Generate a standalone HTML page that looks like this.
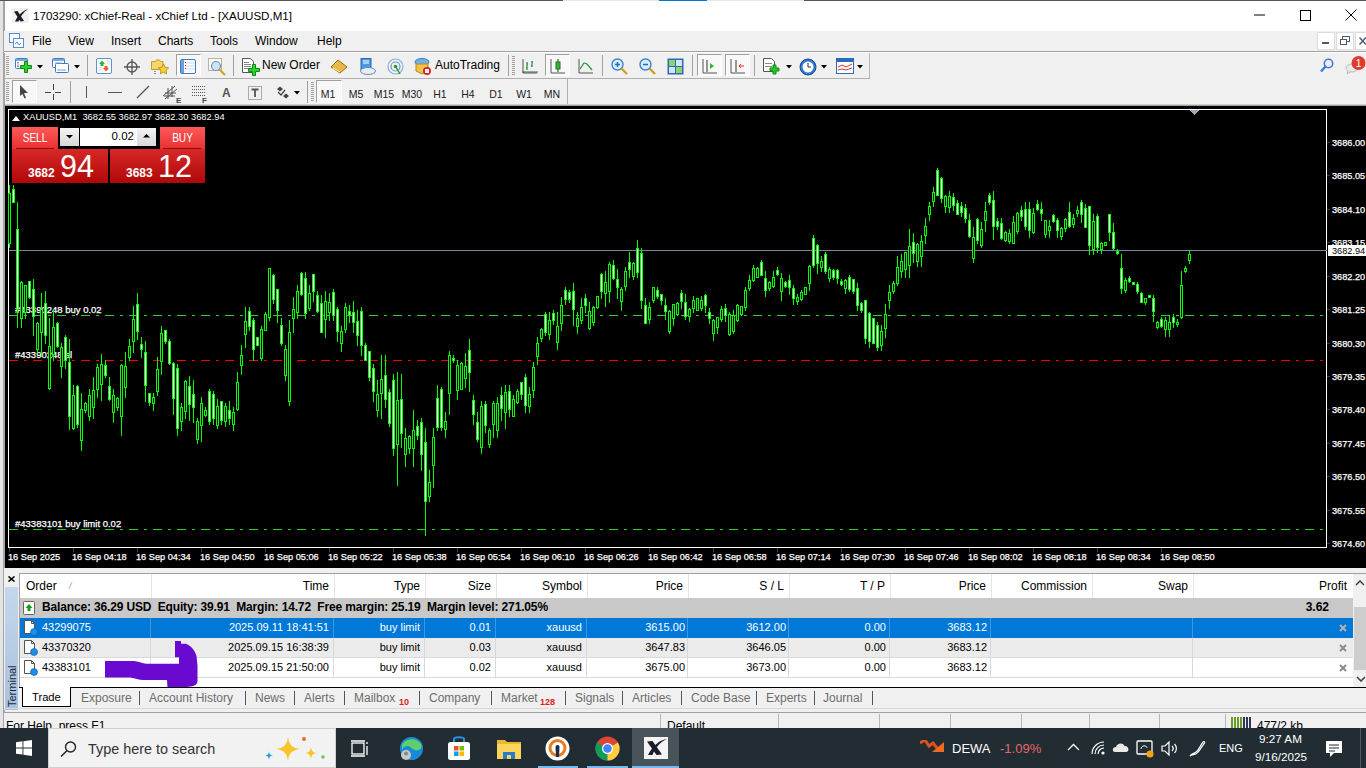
<!DOCTYPE html>
<html><head><meta charset="utf-8"><style>
*{box-sizing:border-box}
html,body{margin:0;padding:0;width:1366px;height:768px;overflow:hidden;background:#f0f0f0;font-family:"Liberation Sans", sans-serif;font-size:12px;color:#000}
.a{position:absolute;display:block}
.t{position:absolute;white-space:nowrap;line-height:1}
</style></head><body>
<div class="a" style="left:0;top:0;width:1366px;height:1px;background:#55515f"></div>
<div class="a" style="left:563px;top:0;width:241px;height:1px;background:#e6e6e6"></div>
<div class="a" style="left:659px;top:0;width:48px;height:1px;background:#0078d7"></div>
<div class="a" style="left:0;top:1px;width:4px;height:767px;background:#e4e4e4"></div>
<div class="a" style="left:3px;top:1px;width:2px;height:767px;background:#a4a4a4"></div>
<div class="a" style="left:5px;top:1px;width:1361px;height:30px;background:#fff"></div>
<svg class="a" style="left:12px;top:8px" width="17" height="15" viewBox="0 0 17 15" ><rect width="17" height="15" fill="#f0f0f0"/><path d="M2 3.5 L5.5 3 L12 13 L8.5 13.5 Z" fill="#1c1c28"/><path d="M16 1 C11 2.5 6 7 3 13.5 L6.5 13.5 C8 9 11 4.5 16 1 Z" fill="#1c1c28"/></svg><div class="t" style="left:33px;top:10px;font-size:11.6px">1703290: xChief-Real - xChief Ltd - [XAUUSD,M1]</div><svg class="a" style="left:1254px;top:14px" width="11" height="2" viewBox="0 0 11 2" ><rect width="11" height="1" y="0.5" fill="#000"/></svg><svg class="a" style="left:1300px;top:10px" width="11" height="11" viewBox="0 0 11 11" ><rect x="0.5" y="0.5" width="10" height="10" fill="none" stroke="#000"/></svg><svg class="a" style="left:1345px;top:9px" width="12" height="12" viewBox="0 0 12 12" ><path d="M0.5 0.5L11.5 11.5M11.5 0.5L0.5 11.5" stroke="#000"/></svg>
<div class="a" style="left:4px;top:31px;width:1362px;height:20px;background:#f0f0f0"></div>
<svg class="a" style="left:9px;top:33px" width="15" height="15" viewBox="0 0 15 15" ><rect x="0.5" y="0.5" width="10" height="9" fill="#fff" stroke="#5a8ad0"/><rect x="4.5" y="5.5" width="10" height="9" fill="#fff" stroke="#5a8ad0"/><path d="M6 11L8 9L10 12L12 10" stroke="#5a8ad0" fill="none"/></svg><div class="t" style="left:32px;top:35px;font-size:12px">File</div><div class="t" style="left:68px;top:35px;font-size:12px">View</div><div class="t" style="left:111px;top:35px;font-size:12px">Insert</div><div class="t" style="left:158px;top:35px;font-size:12px">Charts</div><div class="t" style="left:210px;top:35px;font-size:12px">Tools</div><div class="t" style="left:255px;top:35px;font-size:12px">Window</div><div class="t" style="left:317px;top:35px;font-size:12px">Help</div><div class="a" style="left:1317px;top:32px;width:18px;height:18px;background:#fff;border:1px solid #dcdcdc"></div><div class="a" style="left:1336px;top:32px;width:18px;height:18px;background:#fff;border:1px solid #dcdcdc"></div><div class="a" style="left:1355px;top:32px;width:18px;height:18px;background:#fff;border:1px solid #dcdcdc"></div><svg class="a" style="left:1322px;top:42px" width="7" height="2" viewBox="0 0 7 2" ><rect width="7" height="2" fill="#4a5a70"/></svg><svg class="a" style="left:1340px;top:36px" width="10" height="9" viewBox="0 0 10 9" ><rect x="2.5" y="0.5" width="7" height="5" fill="none" stroke="#4a5a70"/><rect x="0.5" y="3.5" width="6" height="5" fill="#fff" stroke="#4a5a70"/></svg><svg class="a" style="left:1359px;top:37px" width="7" height="8" viewBox="0 0 7 8" ><path d="M0.5 0.5L7 7.5M7 0.5L0.5 7.5" stroke="#4a5a70" stroke-width="1.5"/></svg>
<div class="a" style="left:4px;top:51px;width:1362px;height:1px;background:#a0a0a0"></div>
<div class="a" style="left:4px;top:52px;width:1362px;height:1px;background:#fff"></div>
<svg class="a" style="left:6px;top:56px" width="3" height="20" viewBox="0 0 3 20" ><rect x="0" y="0" width="3" height="1" fill="#a0a0a0"/><rect x="0" y="2" width="3" height="1" fill="#a0a0a0"/><rect x="0" y="4" width="3" height="1" fill="#a0a0a0"/><rect x="0" y="6" width="3" height="1" fill="#a0a0a0"/><rect x="0" y="8" width="3" height="1" fill="#a0a0a0"/><rect x="0" y="10" width="3" height="1" fill="#a0a0a0"/><rect x="0" y="12" width="3" height="1" fill="#a0a0a0"/><rect x="0" y="14" width="3" height="1" fill="#a0a0a0"/><rect x="0" y="16" width="3" height="1" fill="#a0a0a0"/><rect x="0" y="18" width="3" height="1" fill="#a0a0a0"/></svg><svg class="a" style="left:15px;top:58px" width="18" height="16" viewBox="0 0 18 16" ><rect x="0.5" y="0.5" width="12" height="10" rx="1" fill="#fff" stroke="#3d7bc4"/><rect x="1" y="1" width="11" height="2" fill="#7aa7dc"/><path d="M3 4V9M2 5L3 4L4 5M2 8L3 9L4 8" stroke="#7a9cc0" fill="none"/><path d="M9.5 3.5h3v4h4v3h-4v4h-3v-4h-4v-3h4z" fill="#2ad42a" stroke="#118811"/></svg><svg class="a" style="left:37px;top:65px" width="6" height="4" viewBox="0 0 6 4" ><path d="M0 0H6L3 3.5Z" fill="#000"/></svg><svg class="a" style="left:52px;top:58px" width="18" height="16" viewBox="0 0 18 16" ><rect x="0.5" y="0.5" width="12" height="9" rx="1" fill="#fff" stroke="#3d7bc4"/><rect x="1" y="1" width="11" height="2" fill="#7aa7dc"/><rect x="3.5" y="5.5" width="13" height="9" rx="1" fill="#fff" stroke="#3d7bc4"/><path d="M3 5h7M5 12h9" stroke="#7a9cc0"/></svg><svg class="a" style="left:74px;top:65px" width="6" height="4" viewBox="0 0 6 4" ><path d="M0 0H6L3 3.5Z" fill="#000"/></svg><div class="a" style="left:87px;top:55px;width:1px;height:21px;background:#a0a0a0"></div><svg class="a" style="left:96px;top:58px" width="16" height="16" viewBox="0 0 16 16" ><rect x="0.5" y="0.5" width="15" height="15" rx="1.5" fill="#fff" stroke="#5b94d6"/><path d="M3 6L6 2.5L9 6H7.5V8H4.5V6Z" fill="#2fb52f"/><path d="M7 10L10 13.5L13 10H11.5V8H8.5V10Z" fill="#f05a28"/><path d="M10 3h4M10 5h4M2 10h4M2 12h4" stroke="#ccc" stroke-width="0.7"/></svg><svg class="a" style="left:124px;top:59px" width="16" height="16" viewBox="0 0 16 16" ><circle cx="8" cy="8" r="5" fill="none" stroke="#555" stroke-width="1.3"/><path d="M8 0V16M0 8H16" stroke="#555" stroke-width="1.3"/></svg><svg class="a" style="left:151px;top:58px" width="19" height="17" viewBox="0 0 19 17" ><path d="M0.5 3.5h4l1-1.5h3l1 1.5h2.5v8h-11.5z" fill="#f5d66b" stroke="#c49a2a"/><path d="M12.5 6l1.6 3.3 3.6.5-2.6 2.5.6 3.6-3.2-1.7-3.2 1.7.6-3.6-2.6-2.5 3.6-.5z" fill="#f3d03a" stroke="#b8860b" stroke-width="0.8"/><path d="M4 13v1M4 15v1" stroke="#333"/></svg><div class="a" style="left:176px;top:54px;width:25px;height:22px;background:#f8f8f8;border-top:1px solid #a0a0a0;border-left:1px solid #a0a0a0;border-right:1px solid #fff;border-bottom:1px solid #fff"></div><svg class="a" style="left:180px;top:59px" width="16" height="15" viewBox="0 0 16 15" ><rect x="0.5" y="0.5" width="15" height="14" rx="1.5" fill="#fff" stroke="#3d7bc4"/><rect x="1" y="1" width="3" height="13" fill="#6a9fdc"/><path d="M6 4h9M6 7h9M6 10h9" stroke="#b8cdf0" stroke-width="0.8"/><path d="M5 3.5h1M5 6.5h1M5 9.5h1" stroke="#e00"/></svg><svg class="a" style="left:208px;top:58px" width="19" height="18" viewBox="0 0 19 18" ><rect x="0.5" y="0.5" width="13" height="12" fill="#fff" stroke="#c0b090"/><circle cx="8" cy="8" r="4.5" fill="#cfe3f7" stroke="#5a92d0" stroke-width="1.2"/><path d="M11 11L17 17" stroke="#d4a017" stroke-width="2"/></svg><div class="a" style="left:233px;top:55px;width:1px;height:21px;background:#a0a0a0"></div><svg class="a" style="left:242px;top:58px" width="18" height="18" viewBox="0 0 18 18" ><path d="M0.5 0.5h8l3 3v11h-11z" fill="#fff" stroke="#555"/><path d="M2 4.5h5M2 6.5h7M2 8.5h7M2 10.5h5" stroke="#888"/><path d="M10.5 6.5h3v4h4v3h-4v4h-3v-4h-4v-3h4z" fill="#2ad42a" stroke="#118811"/></svg><div class="t" style="left:262px;top:59px;font-size:12px">New Order</div><svg class="a" style="left:330px;top:59px" width="18" height="15" viewBox="0 0 18 15" ><path d="M1 8L8 1L17 8L10 14Z" fill="#e8b84a" stroke="#9a6a10"/><path d="M3 9L10 13" stroke="#fff3c0"/></svg><svg class="a" style="left:359px;top:58px" width="17" height="17" viewBox="0 0 17 17" ><rect x="2" y="0.5" width="10" height="11" fill="#4a9ae0" stroke="#2a6ab0"/><path d="M4 3h6M4 5h6" stroke="#fff"/><ellipse cx="9" cy="13" rx="7.5" ry="3.5" fill="#e8eef8" stroke="#6a8ab8"/></svg><svg class="a" style="left:387px;top:58px" width="17" height="17" viewBox="0 0 17 17" ><circle cx="8.5" cy="8.5" r="7.5" fill="none" stroke="#8ab0d8" stroke-width="1.2"/><circle cx="8.5" cy="8.5" r="4.5" fill="none" stroke="#6a98c8" stroke-width="1.2"/><circle cx="8.5" cy="8.5" r="1.8" fill="#2a9a3a"/><path d="M9 9L13 16" stroke="#2a9a3a" stroke-width="1.5"/></svg><svg class="a" style="left:413px;top:57px" width="19" height="19" viewBox="0 0 19 19" ><ellipse cx="9" cy="5" rx="7" ry="3.5" fill="#6fb2e6" stroke="#3a7ab8"/><path d="M3 7h12v7l-6 3-6-3z" fill="#f2c34a" stroke="#b88a1a"/><circle cx="14" cy="14" r="4" fill="#e02020"/><rect x="12" y="12" width="4" height="4" fill="#fff"/></svg><div class="t" style="left:435px;top:59px;font-size:12px">AutoTrading</div><div class="a" style="left:508px;top:55px;width:1px;height:21px;background:#a0a0a0"></div><svg class="a" style="left:512px;top:56px" width="3" height="20" viewBox="0 0 3 20" ><rect x="0" y="0" width="3" height="1" fill="#a0a0a0"/><rect x="0" y="2" width="3" height="1" fill="#a0a0a0"/><rect x="0" y="4" width="3" height="1" fill="#a0a0a0"/><rect x="0" y="6" width="3" height="1" fill="#a0a0a0"/><rect x="0" y="8" width="3" height="1" fill="#a0a0a0"/><rect x="0" y="10" width="3" height="1" fill="#a0a0a0"/><rect x="0" y="12" width="3" height="1" fill="#a0a0a0"/><rect x="0" y="14" width="3" height="1" fill="#a0a0a0"/><rect x="0" y="16" width="3" height="1" fill="#a0a0a0"/><rect x="0" y="18" width="3" height="1" fill="#a0a0a0"/></svg><svg class="a" style="left:522px;top:58px" width="16" height="16" viewBox="0 0 16 16" ><path d="M1 1V15H15" stroke="#555" fill="none"/><path d="M5 4V12M4 10H5M5 6H6M10 3V9M9 8H10M10 4H11" stroke="#2a9a3a" stroke-width="1.3" fill="none"/><path d="M0 14H16" stroke="#555"/></svg><div class="a" style="left:545px;top:54px;width:25px;height:22px;background:#f8f8f8;border-top:1px solid #a0a0a0;border-left:1px solid #a0a0a0;border-right:1px solid #fff;border-bottom:1px solid #fff"></div><svg class="a" style="left:550px;top:58px" width="16" height="16" viewBox="0 0 16 16" ><path d="M1 1V15H15" stroke="#555" fill="none"/><path d="M8 1V14" stroke="#333"/><rect x="6" y="4" width="4" height="7" fill="#2fb52f" stroke="#1a7a1a"/></svg><svg class="a" style="left:578px;top:58px" width="16" height="16" viewBox="0 0 16 16" ><path d="M1 1V15H15" stroke="#555" fill="none"/><path d="M2 11L6 5L9 6L14 12" stroke="#2a9a3a" stroke-width="1.3" fill="none"/></svg><div class="a" style="left:602px;top:55px;width:1px;height:21px;background:#a0a0a0"></div><svg class="a" style="left:611px;top:58px" width="17" height="17" viewBox="0 0 17 17" ><circle cx="6.5" cy="6.5" r="5.5" fill="#d8ecfb" stroke="#3a84d0" stroke-width="1.4"/><path d="M4 6.5H9M6.5 4V9" stroke="#2a6ab0" stroke-width="1.5"/><path d="M10.5 10.5L16 16" stroke="#d4a017" stroke-width="2.4"/></svg><svg class="a" style="left:639px;top:58px" width="17" height="17" viewBox="0 0 17 17" ><circle cx="6.5" cy="6.5" r="5.5" fill="#d8ecfb" stroke="#3a84d0" stroke-width="1.4"/><path d="M4 6.5H9" stroke="#2a6ab0" stroke-width="1.5"/><path d="M10.5 10.5L16 16" stroke="#d4a017" stroke-width="2.4"/></svg><svg class="a" style="left:667px;top:58px" width="17" height="17" viewBox="0 0 17 17" ><rect x="0.5" y="0.5" width="16" height="16" fill="#2a6ab8"/><rect x="2" y="2" width="6" height="6" fill="#8fd46a"/><rect x="9" y="2" width="6" height="6" fill="#d0e6fa"/><rect x="2" y="9" width="6" height="6" fill="#d0e6fa"/><rect x="9" y="9" width="6" height="6" fill="#8fd46a"/></svg><div class="a" style="left:692px;top:55px;width:1px;height:21px;background:#a0a0a0"></div><div class="a" style="left:697px;top:54px;width:25px;height:22px;background:#f8f8f8;border-top:1px solid #a0a0a0;border-left:1px solid #a0a0a0;border-right:1px solid #fff;border-bottom:1px solid #fff"></div><svg class="a" style="left:702px;top:58px" width="16" height="16" viewBox="0 0 16 16" ><path d="M1 1V15H15" stroke="#555" fill="none"/><path d="M5 2V14" stroke="#333"/><path d="M8 5L12 8L8 11Z" fill="#2fb52f"/></svg><div class="a" style="left:725px;top:54px;width:25px;height:22px;background:#f8f8f8;border-top:1px solid #a0a0a0;border-left:1px solid #a0a0a0;border-right:1px solid #fff;border-bottom:1px solid #fff"></div><svg class="a" style="left:730px;top:58px" width="16" height="16" viewBox="0 0 16 16" ><path d="M1 1V15H15" stroke="#555" fill="none"/><path d="M6 2V14" stroke="#333"/><path d="M14 8H9M11 6L9 8L11 10" stroke="#e03020" fill="none"/></svg><div class="a" style="left:754px;top:55px;width:1px;height:21px;background:#a0a0a0"></div><svg class="a" style="left:763px;top:58px" width="20" height="18" viewBox="0 0 20 18" ><path d="M0.5 0.5h8l3 3v10h-11z" fill="#fff" stroke="#555"/><path d="M2 5.5h7M2 8.5h7" stroke="#888"/><path d="M10 7h3v3h3v3h-3v3h-3v-3h-3v-3h3z" fill="#27c427" stroke="#138a13"/></svg><svg class="a" style="left:786px;top:65px" width="6" height="4" viewBox="0 0 6 4" ><path d="M0 0H6L3 3.5Z" fill="#000"/></svg><svg class="a" style="left:799px;top:58px" width="18" height="18" viewBox="0 0 18 18" ><circle cx="9" cy="9" r="8" fill="#2a7ad0" stroke="#1a4a90"/><circle cx="9" cy="9" r="5.5" fill="#fff"/><path d="M9 5V9H12" stroke="#333" fill="none"/></svg><svg class="a" style="left:821px;top:65px" width="6" height="4" viewBox="0 0 6 4" ><path d="M0 0H6L3 3.5Z" fill="#000"/></svg><svg class="a" style="left:836px;top:58px" width="18" height="16" viewBox="0 0 18 16" ><rect x="0.5" y="0.5" width="17" height="15" fill="#fff" stroke="#2a6ab8"/><rect x="1" y="1" width="16" height="3" fill="#2a6ab8"/><path d="M2 9L6 7L10 9L16 6M2 12L6 11L10 12L16 10" stroke="#d03a2a" fill="none"/></svg><svg class="a" style="left:857px;top:65px" width="6" height="4" viewBox="0 0 6 4" ><path d="M0 0H6L3 3.5Z" fill="#000"/></svg><div class="a" style="left:869px;top:53px;width:1px;height:26px;background:#b8b8b8"></div><svg class="a" style="left:1320px;top:58px" width="14" height="15" viewBox="0 0 14 15" ><circle cx="8.5" cy="5.5" r="4.2" fill="none" stroke="#3a7ad8" stroke-width="1.6"/><path d="M6 8L1 13.5" stroke="#3a7ad8" stroke-width="2.4"/></svg><svg class="a" style="left:1344px;top:56px" width="22" height="20" viewBox="0 0 22 20" ><ellipse cx="8" cy="12" rx="6" ry="4" fill="#eaeaea" stroke="#bbb"/><path d="M4 15L3 18L7 15.5" fill="#eaeaea" stroke="#bbb"/><circle cx="14.5" cy="7" r="7" fill="#e03a2a"/><text x="14.5" y="11" text-anchor="middle" font-family='"Liberation Sans"' font-size="11" fill="#fff">1</text></svg>
<div class="a" style="left:4px;top:78px;width:866px;height:1px;background:#b0b0b0"></div>
<svg class="a" style="left:6px;top:82px" width="3" height="20" viewBox="0 0 3 20" ><rect x="0" y="0" width="3" height="1" fill="#a0a0a0"/><rect x="0" y="2" width="3" height="1" fill="#a0a0a0"/><rect x="0" y="4" width="3" height="1" fill="#a0a0a0"/><rect x="0" y="6" width="3" height="1" fill="#a0a0a0"/><rect x="0" y="8" width="3" height="1" fill="#a0a0a0"/><rect x="0" y="10" width="3" height="1" fill="#a0a0a0"/><rect x="0" y="12" width="3" height="1" fill="#a0a0a0"/><rect x="0" y="14" width="3" height="1" fill="#a0a0a0"/><rect x="0" y="16" width="3" height="1" fill="#a0a0a0"/><rect x="0" y="18" width="3" height="1" fill="#a0a0a0"/></svg><div class="a" style="left:12px;top:80px;width:25px;height:23px;background:#f8f8f8;border-top:1px solid #a0a0a0;border-left:1px solid #a0a0a0;border-right:1px solid #fff;border-bottom:1px solid #fff"></div><svg class="a" style="left:19px;top:85px" width="10" height="14" viewBox="0 0 10 14" ><path d="M1 0L9 8H5L7 13L5.5 13.5L3.5 9L1 11Z" fill="#444"/></svg><svg class="a" style="left:45px;top:84px" width="16" height="16" viewBox="0 0 16 16" ><path d="M8.5 0V6M8.5 10V16M0 8.5H6M10 8.5H16" stroke="#444"/></svg><div class="a" style="left:70px;top:81px;width:1px;height:22px;background:#a0a0a0"></div><svg class="a" style="left:86px;top:86px" width="1" height="12" viewBox="0 0 1 12" ><rect width="1" height="12" fill="#555"/></svg><svg class="a" style="left:108px;top:92px" width="14" height="1" viewBox="0 0 14 1" ><rect width="14" height="1" fill="#555"/></svg><svg class="a" style="left:136px;top:85px" width="14" height="14" viewBox="0 0 14 14" ><path d="M1 13L13 1" stroke="#555" stroke-width="1.2"/></svg><svg class="a" style="left:162px;top:84px" width="22" height="20" viewBox="0 0 22 20" ><path d="M1 12L13 2M3 15L15 5M3 9H14M2 12H13M6 4V15M10 2V13" stroke="#555" stroke-width="1"/><text x="14" y="19" font-family='"Liberation Sans"' font-size="8" font-weight="bold" fill="#444">E</text></svg><svg class="a" style="left:191px;top:85px" width="18" height="19" viewBox="0 0 18 19" ><path d="M1 1.5H14M1 4.5H14M1 7.5H14M1 10.5H14" stroke="#555" stroke-dasharray="1 1"/><text x="11" y="18" font-family='"Liberation Sans"' font-size="8" font-weight="bold" fill="#444">F</text></svg><div class="t" style="left:222px;top:87px;font-size:12px;font-weight:bold;color:#555">A</div><svg class="a" style="left:248px;top:86px" width="14" height="14" viewBox="0 0 14 14" ><rect x="0.5" y="0.5" width="13" height="13" fill="none" stroke="#666" stroke-dasharray="1 1"/><path d="M3.5 3.5H10.5M7 3.5V11" stroke="#555" stroke-width="1.8"/></svg><svg class="a" style="left:276px;top:86px" width="15" height="14" viewBox="0 0 15 14" ><path d="M1 3L4 0.5L7 3L4 5.5Z M7 10L10 7.5L13 10L10 12.5Z" fill="#444"/><path d="M2 6L5 9L9 4" stroke="#444" stroke-width="1.3" fill="none"/></svg><svg class="a" style="left:294px;top:91px" width="6" height="4" viewBox="0 0 6 4" ><path d="M0 0H6L3 3.5Z" fill="#000"/></svg><div class="a" style="left:307px;top:81px;width:1px;height:22px;background:#a0a0a0"></div><svg class="a" style="left:311px;top:82px" width="3" height="20" viewBox="0 0 3 20" ><rect x="0" y="0" width="3" height="1" fill="#a0a0a0"/><rect x="0" y="2" width="3" height="1" fill="#a0a0a0"/><rect x="0" y="4" width="3" height="1" fill="#a0a0a0"/><rect x="0" y="6" width="3" height="1" fill="#a0a0a0"/><rect x="0" y="8" width="3" height="1" fill="#a0a0a0"/><rect x="0" y="10" width="3" height="1" fill="#a0a0a0"/><rect x="0" y="12" width="3" height="1" fill="#a0a0a0"/><rect x="0" y="14" width="3" height="1" fill="#a0a0a0"/><rect x="0" y="16" width="3" height="1" fill="#a0a0a0"/><rect x="0" y="18" width="3" height="1" fill="#a0a0a0"/></svg><div class="a" style="left:316px;top:80px;width:26px;height:23px;background:#f8f8f8;border-top:1px solid #a0a0a0;border-left:1px solid #a0a0a0;border-right:1px solid #fff;border-bottom:1px solid #fff"></div><div class="t" style="left:308px;top:89px;width:40px;text-align:center;font-size:10.5px;color:#222">M1</div><div class="t" style="left:336px;top:89px;width:40px;text-align:center;font-size:10.5px;color:#222">M5</div><div class="t" style="left:364px;top:89px;width:40px;text-align:center;font-size:10.5px;color:#222">M15</div><div class="t" style="left:392px;top:89px;width:40px;text-align:center;font-size:10.5px;color:#222">M30</div><div class="t" style="left:420px;top:89px;width:40px;text-align:center;font-size:10.5px;color:#222">H1</div><div class="t" style="left:448px;top:89px;width:40px;text-align:center;font-size:10.5px;color:#222">H4</div><div class="t" style="left:476px;top:89px;width:40px;text-align:center;font-size:10.5px;color:#222">D1</div><div class="t" style="left:504px;top:89px;width:40px;text-align:center;font-size:10.5px;color:#222">W1</div><div class="t" style="left:532px;top:89px;width:40px;text-align:center;font-size:10.5px;color:#222">MN</div><div class="a" style="left:567px;top:79px;width:1px;height:26px;background:#b0b0b0"></div>
<div class="a" style="left:5px;top:104px;width:1361px;height:1px;background:#d0d0d0"></div>
<div class="a" style="left:5px;top:105px;width:1361px;height:1px;background:#a0a0a0"></div>
<div class="a" style="left:5px;top:106px;width:1361px;height:462px;background:#000"></div>
<svg width="1366" height="462" style="position:absolute;left:0;top:106px;display:block" shape-rendering="crispEdges"><rect x="8.5" y="3.5" width="1318" height="438" fill="none" stroke="#fff" stroke-width="1"/><g font-family='"Liberation Sans"' font-size="9.5" fill="#fff" stroke="#fff" stroke-width="0.25"><text x="15" y="207">#43390248 buy 0.02</text><text x="15" y="252">#43390248 sl</text><text x="15" y="421">#43383101 buy limit 0.02</text></g><line x1="9" y1="209.5" x2="1326" y2="209.5" stroke="#32cd32" stroke-width="1" stroke-dasharray="9 6 3 6"/><line x1="9" y1="254.5" x2="1326" y2="254.5" stroke="#ff0000" stroke-width="1" stroke-dasharray="9 6 3 6"/><line x1="9" y1="423.5" x2="1326" y2="423.5" stroke="#32cd32" stroke-width="1" stroke-dasharray="9 6 3 6"/><line x1="9" y1="144.5" x2="1327" y2="144.5" stroke="#778899" stroke-width="1"/><line x1="9.5" y1="79" x2="9.5" y2="142" stroke="#0f0"/><rect x="8.5" y="87.5" width="2" height="50" fill="#000" stroke="#0f0"/><line x1="13.5" y1="79" x2="13.5" y2="97" stroke="#0f0"/><rect x="12.5" y="83.5" width="2" height="13" fill="#fff" stroke="#0f0"/><line x1="17.5" y1="96" x2="17.5" y2="222" stroke="#0f0"/><rect x="16.5" y="123.5" width="2" height="80" fill="#fff" stroke="#0f0"/><line x1="21.5" y1="175" x2="21.5" y2="222" stroke="#0f0"/><rect x="20.5" y="176.5" width="2" height="36" fill="#000" stroke="#0f0"/><line x1="25.5" y1="179" x2="25.5" y2="213" stroke="#0f0"/><rect x="24.5" y="179.5" width="2" height="27" fill="#000" stroke="#0f0"/><line x1="29.5" y1="175" x2="29.5" y2="193" stroke="#0f0"/><rect x="28.5" y="175.5" width="2" height="16" fill="#fff" stroke="#0f0"/><line x1="33.5" y1="173" x2="33.5" y2="230" stroke="#0f0"/><rect x="32.5" y="183.5" width="2" height="27" fill="#fff" stroke="#0f0"/><line x1="37.5" y1="216" x2="37.5" y2="247" stroke="#0f0"/><rect x="36.5" y="217.5" width="2" height="26" fill="#000" stroke="#0f0"/><line x1="41.5" y1="187" x2="41.5" y2="251" stroke="#0f0"/><rect x="40.5" y="203.5" width="2" height="23" fill="#000" stroke="#0f0"/><line x1="45.5" y1="185" x2="45.5" y2="238" stroke="#0f0"/><rect x="44.5" y="197.5" width="2" height="32" fill="#fff" stroke="#0f0"/><line x1="49.5" y1="212" x2="49.5" y2="284" stroke="#0f0"/><rect x="48.5" y="240.5" width="2" height="42" fill="#000" stroke="#0f0"/><line x1="53.5" y1="204" x2="53.5" y2="255" stroke="#0f0"/><rect x="52.5" y="221.5" width="2" height="27" fill="#000" stroke="#0f0"/><line x1="57.5" y1="216" x2="57.5" y2="242" stroke="#0f0"/><rect x="56.5" y="217.5" width="2" height="23" fill="#fff" stroke="#0f0"/><line x1="61.5" y1="237" x2="61.5" y2="272" stroke="#0f0"/><rect x="60.5" y="241.5" width="2" height="19" fill="#000" stroke="#0f0"/><line x1="65.5" y1="229" x2="65.5" y2="263" stroke="#0f0"/><rect x="64.5" y="231.5" width="2" height="23" fill="#fff" stroke="#0f0"/><line x1="69.5" y1="233" x2="69.5" y2="324" stroke="#0f0"/><rect x="68.5" y="256.5" width="2" height="54" fill="#fff" stroke="#0f0"/><line x1="73.5" y1="279" x2="73.5" y2="324" stroke="#0f0"/><rect x="72.5" y="289.5" width="2" height="33" fill="#000" stroke="#0f0"/><line x1="77.5" y1="279" x2="77.5" y2="322" stroke="#0f0"/><rect x="76.5" y="280.5" width="2" height="38" fill="#fff" stroke="#0f0"/><line x1="81.5" y1="287" x2="81.5" y2="345" stroke="#0f0"/><rect x="80.5" y="303.5" width="2" height="31" fill="#000" stroke="#0f0"/><line x1="85.5" y1="296" x2="85.5" y2="307" stroke="#0f0"/><rect x="84.5" y="297.5" width="2" height="7" fill="#000" stroke="#0f0"/><line x1="89.5" y1="283" x2="89.5" y2="315" stroke="#0f0"/><rect x="88.5" y="289.5" width="2" height="21" fill="#000" stroke="#0f0"/><line x1="93.5" y1="271" x2="93.5" y2="313" stroke="#0f0"/><rect x="92.5" y="284.5" width="2" height="17" fill="#000" stroke="#0f0"/><line x1="97.5" y1="258" x2="97.5" y2="292" stroke="#0f0"/><rect x="96.5" y="261.5" width="2" height="22" fill="#000" stroke="#0f0"/><line x1="101.5" y1="248" x2="101.5" y2="295" stroke="#0f0"/><rect x="100.5" y="258.5" width="2" height="20" fill="#000" stroke="#0f0"/><line x1="105.5" y1="254" x2="105.5" y2="272" stroke="#0f0"/><rect x="104.5" y="259.5" width="2" height="10" fill="#fff" stroke="#0f0"/><line x1="109.5" y1="271" x2="109.5" y2="295" stroke="#0f0"/><rect x="108.5" y="280.5" width="2" height="13" fill="#fff" stroke="#0f0"/><line x1="113.5" y1="283" x2="113.5" y2="317" stroke="#0f0"/><rect x="112.5" y="289.5" width="2" height="17" fill="#000" stroke="#0f0"/><line x1="117.5" y1="291" x2="117.5" y2="305" stroke="#0f0"/><rect x="116.5" y="292.5" width="2" height="9" fill="#000" stroke="#0f0"/><line x1="121.5" y1="258" x2="121.5" y2="330" stroke="#0f0"/><rect x="120.5" y="259.5" width="2" height="51" fill="#000" stroke="#0f0"/><line x1="125.5" y1="246" x2="125.5" y2="292" stroke="#0f0"/><rect x="124.5" y="260.5" width="2" height="21" fill="#000" stroke="#0f0"/><line x1="129.5" y1="233" x2="129.5" y2="255" stroke="#0f0"/><rect x="128.5" y="240.5" width="2" height="11" fill="#000" stroke="#0f0"/><line x1="133.5" y1="200" x2="133.5" y2="247" stroke="#0f0"/><rect x="132.5" y="213.5" width="2" height="22" fill="#000" stroke="#0f0"/><line x1="137.5" y1="187" x2="137.5" y2="234" stroke="#0f0"/><rect x="136.5" y="198.5" width="2" height="27" fill="#fff" stroke="#0f0"/><line x1="141.5" y1="231" x2="141.5" y2="252" stroke="#0f0"/><rect x="140.5" y="238.5" width="2" height="5" fill="#fff" stroke="#0f0"/><line x1="145.5" y1="235" x2="145.5" y2="296" stroke="#0f0"/><rect x="144.5" y="246.5" width="2" height="33" fill="#fff" stroke="#0f0"/><line x1="149.5" y1="287" x2="149.5" y2="300" stroke="#0f0"/><rect x="148.5" y="287.5" width="2" height="9" fill="#fff" stroke="#0f0"/><line x1="153.5" y1="287" x2="153.5" y2="305" stroke="#0f0"/><rect x="152.5" y="291.5" width="2" height="6" fill="#000" stroke="#0f0"/><line x1="157.5" y1="251" x2="157.5" y2="290" stroke="#0f0"/><rect x="156.5" y="263.5" width="2" height="22" fill="#000" stroke="#0f0"/><line x1="161.5" y1="220" x2="161.5" y2="269" stroke="#0f0"/><rect x="160.5" y="227.5" width="2" height="28" fill="#000" stroke="#0f0"/><line x1="165.5" y1="224" x2="165.5" y2="238" stroke="#0f0"/><rect x="164.5" y="224.5" width="2" height="11" fill="#fff" stroke="#0f0"/><line x1="169.5" y1="233" x2="169.5" y2="259" stroke="#0f0"/><rect x="168.5" y="235.5" width="2" height="22" fill="#fff" stroke="#0f0"/><line x1="173.5" y1="256" x2="173.5" y2="309" stroke="#0f0"/><rect x="172.5" y="257.5" width="2" height="35" fill="#fff" stroke="#0f0"/><line x1="177.5" y1="258" x2="177.5" y2="330" stroke="#0f0"/><rect x="176.5" y="262.5" width="2" height="60" fill="#fff" stroke="#0f0"/><line x1="181.5" y1="297" x2="181.5" y2="325" stroke="#0f0"/><rect x="180.5" y="301.5" width="2" height="14" fill="#000" stroke="#0f0"/><line x1="185.5" y1="274" x2="185.5" y2="313" stroke="#0f0"/><rect x="184.5" y="275.5" width="2" height="30" fill="#000" stroke="#0f0"/><line x1="189.5" y1="270" x2="189.5" y2="315" stroke="#0f0"/><rect x="188.5" y="280.5" width="2" height="18" fill="#fff" stroke="#0f0"/><line x1="193.5" y1="274" x2="193.5" y2="317" stroke="#0f0"/><rect x="192.5" y="288.5" width="2" height="13" fill="#fff" stroke="#0f0"/><line x1="197.5" y1="312" x2="197.5" y2="338" stroke="#0f0"/><rect x="196.5" y="315.5" width="2" height="18" fill="#000" stroke="#0f0"/><line x1="201.5" y1="291" x2="201.5" y2="336" stroke="#0f0"/><rect x="200.5" y="297.5" width="2" height="22" fill="#000" stroke="#0f0"/><line x1="205.5" y1="301" x2="205.5" y2="311" stroke="#0f0"/><rect x="204.5" y="304.5" width="2" height="5" fill="#000" stroke="#0f0"/><line x1="209.5" y1="283" x2="209.5" y2="319" stroke="#0f0"/><rect x="208.5" y="285.5" width="2" height="30" fill="#fff" stroke="#0f0"/><line x1="213.5" y1="285" x2="213.5" y2="319" stroke="#0f0"/><rect x="212.5" y="288.5" width="2" height="24" fill="#fff" stroke="#0f0"/><line x1="217.5" y1="293" x2="217.5" y2="323" stroke="#0f0"/><rect x="216.5" y="300.5" width="2" height="19" fill="#000" stroke="#0f0"/><line x1="221.5" y1="295" x2="221.5" y2="319" stroke="#0f0"/><rect x="220.5" y="295.5" width="2" height="19" fill="#fff" stroke="#0f0"/><line x1="225.5" y1="297" x2="225.5" y2="321" stroke="#0f0"/><rect x="224.5" y="300.5" width="2" height="15" fill="#000" stroke="#0f0"/><line x1="229.5" y1="295" x2="229.5" y2="319" stroke="#0f0"/><rect x="228.5" y="304.5" width="2" height="8" fill="#fff" stroke="#0f0"/><line x1="233.5" y1="301" x2="233.5" y2="325" stroke="#0f0"/><rect x="232.5" y="306.5" width="2" height="12" fill="#000" stroke="#0f0"/><line x1="237.5" y1="266" x2="237.5" y2="305" stroke="#0f0"/><rect x="236.5" y="276.5" width="2" height="27" fill="#000" stroke="#0f0"/><line x1="241.5" y1="239" x2="241.5" y2="269" stroke="#0f0"/><rect x="240.5" y="249.5" width="2" height="10" fill="#000" stroke="#0f0"/><line x1="245.5" y1="201" x2="245.5" y2="242" stroke="#0f0"/><rect x="244.5" y="215.5" width="2" height="13" fill="#000" stroke="#0f0"/><line x1="249.5" y1="201" x2="249.5" y2="225" stroke="#0f0"/><rect x="248.5" y="205.5" width="2" height="15" fill="#fff" stroke="#0f0"/><line x1="253.5" y1="212" x2="253.5" y2="255" stroke="#0f0"/><rect x="252.5" y="214.5" width="2" height="29" fill="#fff" stroke="#0f0"/><line x1="257.5" y1="231" x2="257.5" y2="240" stroke="#0f0"/><rect x="256.5" y="231.5" width="2" height="8" fill="#fff" stroke="#0f0"/><line x1="261.5" y1="220" x2="261.5" y2="255" stroke="#0f0"/><rect x="260.5" y="223.5" width="2" height="29" fill="#000" stroke="#0f0"/><line x1="265.5" y1="206" x2="265.5" y2="225" stroke="#0f0"/><rect x="264.5" y="208.5" width="2" height="16" fill="#000" stroke="#0f0"/><line x1="269.5" y1="162" x2="269.5" y2="215" stroke="#0f0"/><rect x="268.5" y="162.5" width="2" height="49" fill="#000" stroke="#0f0"/><line x1="273.5" y1="168" x2="273.5" y2="198" stroke="#0f0"/><rect x="272.5" y="169.5" width="2" height="24" fill="#fff" stroke="#0f0"/><line x1="277.5" y1="183" x2="277.5" y2="217" stroke="#0f0"/><rect x="276.5" y="183.5" width="2" height="21" fill="#fff" stroke="#0f0"/><line x1="281.5" y1="212" x2="281.5" y2="240" stroke="#0f0"/><rect x="280.5" y="219.5" width="2" height="18" fill="#fff" stroke="#0f0"/><line x1="285.5" y1="239" x2="285.5" y2="275" stroke="#0f0"/><rect x="284.5" y="243.5" width="2" height="26" fill="#000" stroke="#0f0"/><line x1="289.5" y1="214" x2="289.5" y2="300" stroke="#0f0"/><rect x="288.5" y="226.5" width="2" height="69" fill="#000" stroke="#0f0"/><line x1="293.5" y1="191" x2="293.5" y2="227" stroke="#0f0"/><rect x="292.5" y="203.5" width="2" height="9" fill="#000" stroke="#0f0"/><line x1="297.5" y1="179" x2="297.5" y2="213" stroke="#0f0"/><rect x="296.5" y="185.5" width="2" height="21" fill="#000" stroke="#0f0"/><line x1="301.5" y1="166" x2="301.5" y2="190" stroke="#0f0"/><rect x="300.5" y="167.5" width="2" height="21" fill="#fff" stroke="#0f0"/><line x1="305.5" y1="166" x2="305.5" y2="213" stroke="#0f0"/><rect x="304.5" y="172.5" width="2" height="35" fill="#fff" stroke="#0f0"/><line x1="309.5" y1="179" x2="309.5" y2="205" stroke="#0f0"/><rect x="308.5" y="187.5" width="2" height="15" fill="#000" stroke="#0f0"/><line x1="313.5" y1="168" x2="313.5" y2="196" stroke="#0f0"/><rect x="312.5" y="168.5" width="2" height="17" fill="#fff" stroke="#0f0"/><line x1="317.5" y1="185" x2="317.5" y2="207" stroke="#0f0"/><rect x="316.5" y="189.5" width="2" height="16" fill="#fff" stroke="#0f0"/><line x1="321.5" y1="189" x2="321.5" y2="227" stroke="#0f0"/><rect x="320.5" y="197.5" width="2" height="29" fill="#fff" stroke="#0f0"/><line x1="325.5" y1="185" x2="325.5" y2="232" stroke="#0f0"/><rect x="324.5" y="195.5" width="2" height="18" fill="#000" stroke="#0f0"/><line x1="329.5" y1="187" x2="329.5" y2="215" stroke="#0f0"/><rect x="328.5" y="196.5" width="2" height="10" fill="#000" stroke="#0f0"/><line x1="333.5" y1="183" x2="333.5" y2="215" stroke="#0f0"/><rect x="332.5" y="186.5" width="2" height="23" fill="#fff" stroke="#0f0"/><line x1="337.5" y1="201" x2="337.5" y2="236" stroke="#0f0"/><rect x="336.5" y="203.5" width="2" height="22" fill="#fff" stroke="#0f0"/><line x1="341.5" y1="220" x2="341.5" y2="246" stroke="#0f0"/><rect x="340.5" y="225.5" width="2" height="12" fill="#000" stroke="#0f0"/><line x1="345.5" y1="197" x2="345.5" y2="227" stroke="#0f0"/><rect x="344.5" y="201.5" width="2" height="22" fill="#000" stroke="#0f0"/><line x1="349.5" y1="199" x2="349.5" y2="217" stroke="#0f0"/><rect x="348.5" y="205.5" width="2" height="4" fill="#fff" stroke="#0f0"/><line x1="353.5" y1="195" x2="353.5" y2="227" stroke="#0f0"/><rect x="352.5" y="206.5" width="2" height="10" fill="#fff" stroke="#0f0"/><line x1="357.5" y1="204" x2="357.5" y2="240" stroke="#0f0"/><rect x="356.5" y="215.5" width="2" height="14" fill="#fff" stroke="#0f0"/><line x1="361.5" y1="201" x2="361.5" y2="250" stroke="#0f0"/><rect x="360.5" y="205.5" width="2" height="34" fill="#fff" stroke="#0f0"/><line x1="365.5" y1="237" x2="365.5" y2="255" stroke="#0f0"/><rect x="364.5" y="239.5" width="2" height="15" fill="#fff" stroke="#0f0"/><line x1="369.5" y1="245" x2="369.5" y2="275" stroke="#0f0"/><rect x="368.5" y="245.5" width="2" height="26" fill="#fff" stroke="#0f0"/><line x1="373.5" y1="258" x2="373.5" y2="296" stroke="#0f0"/><rect x="372.5" y="262.5" width="2" height="23" fill="#fff" stroke="#0f0"/><line x1="377.5" y1="274" x2="377.5" y2="311" stroke="#0f0"/><rect x="376.5" y="288.5" width="2" height="16" fill="#000" stroke="#0f0"/><line x1="381.5" y1="249" x2="381.5" y2="313" stroke="#0f0"/><rect x="380.5" y="273.5" width="2" height="14" fill="#000" stroke="#0f0"/><line x1="385.5" y1="249" x2="385.5" y2="302" stroke="#0f0"/><rect x="384.5" y="269.5" width="2" height="24" fill="#fff" stroke="#0f0"/><line x1="389.5" y1="283" x2="389.5" y2="321" stroke="#0f0"/><rect x="388.5" y="286.5" width="2" height="31" fill="#fff" stroke="#0f0"/><line x1="393.5" y1="268" x2="393.5" y2="350" stroke="#0f0"/><rect x="392.5" y="274.5" width="2" height="68" fill="#fff" stroke="#0f0"/><line x1="397.5" y1="266" x2="397.5" y2="380" stroke="#0f0"/><rect x="396.5" y="294.5" width="2" height="44" fill="#000" stroke="#0f0"/><line x1="401.5" y1="268" x2="401.5" y2="342" stroke="#0f0"/><rect x="400.5" y="293.5" width="2" height="34" fill="#fff" stroke="#0f0"/><line x1="405.5" y1="322" x2="405.5" y2="361" stroke="#0f0"/><rect x="404.5" y="332.5" width="2" height="16" fill="#000" stroke="#0f0"/><line x1="409.5" y1="329" x2="409.5" y2="348" stroke="#0f0"/><rect x="408.5" y="330.5" width="2" height="12" fill="#000" stroke="#0f0"/><line x1="413.5" y1="304" x2="413.5" y2="361" stroke="#0f0"/><rect x="412.5" y="324.5" width="2" height="18" fill="#000" stroke="#0f0"/><line x1="417.5" y1="314" x2="417.5" y2="334" stroke="#0f0"/><rect x="416.5" y="320.5" width="2" height="9" fill="#fff" stroke="#0f0"/><line x1="421.5" y1="312" x2="421.5" y2="365" stroke="#0f0"/><rect x="420.5" y="316.5" width="2" height="32" fill="#fff" stroke="#0f0"/><line x1="425.5" y1="322" x2="425.5" y2="430" stroke="#0f0"/><rect x="424.5" y="336.5" width="2" height="59" fill="#fff" stroke="#0f0"/><line x1="429.5" y1="364" x2="429.5" y2="396" stroke="#0f0"/><rect x="428.5" y="376.5" width="2" height="14" fill="#000" stroke="#0f0"/><line x1="433.5" y1="322" x2="433.5" y2="382" stroke="#0f0"/><rect x="432.5" y="331.5" width="2" height="28" fill="#000" stroke="#0f0"/><line x1="437.5" y1="279" x2="437.5" y2="325" stroke="#0f0"/><rect x="436.5" y="292.5" width="2" height="29" fill="#fff" stroke="#0f0"/><line x1="441.5" y1="281" x2="441.5" y2="325" stroke="#0f0"/><rect x="440.5" y="283.5" width="2" height="38" fill="#fff" stroke="#0f0"/><line x1="445.5" y1="306" x2="445.5" y2="332" stroke="#0f0"/><rect x="444.5" y="315.5" width="2" height="8" fill="#000" stroke="#0f0"/><line x1="449.5" y1="245" x2="449.5" y2="309" stroke="#0f0"/><rect x="448.5" y="249.5" width="2" height="38" fill="#000" stroke="#0f0"/><line x1="453.5" y1="249" x2="453.5" y2="257" stroke="#0f0"/><rect x="452.5" y="252.5" width="2" height="2" fill="#fff" stroke="#0f0"/><line x1="457.5" y1="254" x2="457.5" y2="294" stroke="#0f0"/><rect x="456.5" y="259.5" width="2" height="25" fill="#000" stroke="#0f0"/><line x1="461.5" y1="256" x2="461.5" y2="284" stroke="#0f0"/><rect x="460.5" y="257.5" width="2" height="26" fill="#000" stroke="#0f0"/><line x1="465.5" y1="247" x2="465.5" y2="282" stroke="#0f0"/><rect x="464.5" y="260.5" width="2" height="12" fill="#000" stroke="#0f0"/><line x1="469.5" y1="233" x2="469.5" y2="286" stroke="#0f0"/><rect x="468.5" y="244.5" width="2" height="22" fill="#fff" stroke="#0f0"/><line x1="473.5" y1="289" x2="473.5" y2="319" stroke="#0f0"/><rect x="472.5" y="294.5" width="2" height="14" fill="#fff" stroke="#0f0"/><line x1="477.5" y1="306" x2="477.5" y2="336" stroke="#0f0"/><rect x="476.5" y="316.5" width="2" height="17" fill="#fff" stroke="#0f0"/><line x1="481.5" y1="295" x2="481.5" y2="348" stroke="#0f0"/><rect x="480.5" y="300.5" width="2" height="41" fill="#000" stroke="#0f0"/><line x1="485.5" y1="295" x2="485.5" y2="327" stroke="#0f0"/><rect x="484.5" y="298.5" width="2" height="21" fill="#fff" stroke="#0f0"/><line x1="489.5" y1="322" x2="489.5" y2="342" stroke="#0f0"/><rect x="488.5" y="324.5" width="2" height="14" fill="#000" stroke="#0f0"/><line x1="493.5" y1="295" x2="493.5" y2="332" stroke="#0f0"/><rect x="492.5" y="297.5" width="2" height="21" fill="#000" stroke="#0f0"/><line x1="497.5" y1="291" x2="497.5" y2="332" stroke="#0f0"/><rect x="496.5" y="297.5" width="2" height="27" fill="#000" stroke="#0f0"/><line x1="501.5" y1="281" x2="501.5" y2="315" stroke="#0f0"/><rect x="500.5" y="289.5" width="2" height="13" fill="#fff" stroke="#0f0"/><line x1="505.5" y1="279" x2="505.5" y2="323" stroke="#0f0"/><rect x="504.5" y="286.5" width="2" height="20" fill="#000" stroke="#0f0"/><line x1="509.5" y1="279" x2="509.5" y2="311" stroke="#0f0"/><rect x="508.5" y="285.5" width="2" height="18" fill="#fff" stroke="#0f0"/><line x1="513.5" y1="289" x2="513.5" y2="311" stroke="#0f0"/><rect x="512.5" y="293.5" width="2" height="17" fill="#000" stroke="#0f0"/><line x1="517.5" y1="283" x2="517.5" y2="298" stroke="#0f0"/><rect x="516.5" y="285.5" width="2" height="11" fill="#000" stroke="#0f0"/><line x1="521.5" y1="276" x2="521.5" y2="294" stroke="#0f0"/><rect x="520.5" y="276.5" width="2" height="12" fill="#fff" stroke="#0f0"/><line x1="525.5" y1="268" x2="525.5" y2="307" stroke="#0f0"/><rect x="524.5" y="271.5" width="2" height="28" fill="#fff" stroke="#0f0"/><line x1="529.5" y1="281" x2="529.5" y2="307" stroke="#0f0"/><rect x="528.5" y="288.5" width="2" height="12" fill="#000" stroke="#0f0"/><line x1="533.5" y1="256" x2="533.5" y2="292" stroke="#0f0"/><rect x="532.5" y="261.5" width="2" height="23" fill="#000" stroke="#0f0"/><line x1="537.5" y1="231" x2="537.5" y2="259" stroke="#0f0"/><rect x="536.5" y="237.5" width="2" height="13" fill="#000" stroke="#0f0"/><line x1="541.5" y1="222" x2="541.5" y2="236" stroke="#0f0"/><rect x="540.5" y="223.5" width="2" height="9" fill="#000" stroke="#0f0"/><line x1="545.5" y1="206" x2="545.5" y2="230" stroke="#0f0"/><rect x="544.5" y="208.5" width="2" height="18" fill="#fff" stroke="#0f0"/><line x1="549.5" y1="206" x2="549.5" y2="234" stroke="#0f0"/><rect x="548.5" y="214.5" width="2" height="14" fill="#000" stroke="#0f0"/><line x1="553.5" y1="204" x2="553.5" y2="219" stroke="#0f0"/><rect x="552.5" y="207.5" width="2" height="7" fill="#fff" stroke="#0f0"/><line x1="557.5" y1="206" x2="557.5" y2="244" stroke="#0f0"/><rect x="556.5" y="220.5" width="2" height="16" fill="#000" stroke="#0f0"/><line x1="561.5" y1="191" x2="561.5" y2="225" stroke="#0f0"/><rect x="560.5" y="199.5" width="2" height="18" fill="#000" stroke="#0f0"/><line x1="565.5" y1="181" x2="565.5" y2="199" stroke="#0f0"/><rect x="564.5" y="184.5" width="2" height="9" fill="#fff" stroke="#0f0"/><line x1="569.5" y1="184" x2="569.5" y2="197" stroke="#0f0"/><rect x="568.5" y="186.5" width="2" height="7" fill="#fff" stroke="#0f0"/><line x1="573.5" y1="177" x2="573.5" y2="220" stroke="#0f0"/><rect x="572.5" y="185.5" width="2" height="18" fill="#fff" stroke="#0f0"/><line x1="577.5" y1="206" x2="577.5" y2="228" stroke="#0f0"/><rect x="576.5" y="212.5" width="2" height="8" fill="#000" stroke="#0f0"/><line x1="581.5" y1="192" x2="581.5" y2="218" stroke="#0f0"/><rect x="580.5" y="201.5" width="2" height="13" fill="#000" stroke="#0f0"/><line x1="585.5" y1="188" x2="585.5" y2="207" stroke="#0f0"/><rect x="584.5" y="192.5" width="2" height="7" fill="#fff" stroke="#0f0"/><line x1="589.5" y1="196" x2="589.5" y2="224" stroke="#0f0"/><rect x="588.5" y="205.5" width="2" height="17" fill="#000" stroke="#0f0"/><line x1="593.5" y1="200" x2="593.5" y2="220" stroke="#0f0"/><rect x="592.5" y="201.5" width="2" height="15" fill="#000" stroke="#0f0"/><line x1="597.5" y1="190" x2="597.5" y2="203" stroke="#0f0"/><rect x="596.5" y="190.5" width="2" height="11" fill="#000" stroke="#0f0"/><line x1="601.5" y1="167" x2="601.5" y2="193" stroke="#0f0"/><rect x="600.5" y="168.5" width="2" height="17" fill="#fff" stroke="#0f0"/><line x1="605.5" y1="165" x2="605.5" y2="201" stroke="#0f0"/><rect x="604.5" y="176.5" width="2" height="11" fill="#000" stroke="#0f0"/><line x1="609.5" y1="156" x2="609.5" y2="197" stroke="#0f0"/><rect x="608.5" y="158.5" width="2" height="27" fill="#000" stroke="#0f0"/><line x1="613.5" y1="154" x2="613.5" y2="174" stroke="#0f0"/><rect x="612.5" y="159.5" width="2" height="13" fill="#fff" stroke="#0f0"/><line x1="617.5" y1="163" x2="617.5" y2="193" stroke="#0f0"/><rect x="616.5" y="173.5" width="2" height="8" fill="#fff" stroke="#0f0"/><line x1="621.5" y1="181" x2="621.5" y2="205" stroke="#0f0"/><rect x="620.5" y="183.5" width="2" height="12" fill="#000" stroke="#0f0"/><line x1="625.5" y1="161" x2="625.5" y2="185" stroke="#0f0"/><rect x="624.5" y="165.5" width="2" height="15" fill="#000" stroke="#0f0"/><line x1="629.5" y1="146" x2="629.5" y2="172" stroke="#0f0"/><rect x="628.5" y="156.5" width="2" height="7" fill="#fff" stroke="#0f0"/><line x1="633.5" y1="156" x2="633.5" y2="174" stroke="#0f0"/><rect x="632.5" y="157.5" width="2" height="13" fill="#000" stroke="#0f0"/><line x1="637.5" y1="134" x2="637.5" y2="172" stroke="#0f0"/><rect x="636.5" y="142.5" width="2" height="24" fill="#fff" stroke="#0f0"/><line x1="641.5" y1="142" x2="641.5" y2="203" stroke="#0f0"/><rect x="640.5" y="147.5" width="2" height="47" fill="#fff" stroke="#0f0"/><line x1="645.5" y1="192" x2="645.5" y2="218" stroke="#0f0"/><rect x="644.5" y="199.5" width="2" height="18" fill="#fff" stroke="#0f0"/><line x1="649.5" y1="196" x2="649.5" y2="218" stroke="#0f0"/><rect x="648.5" y="201.5" width="2" height="12" fill="#000" stroke="#0f0"/><line x1="653.5" y1="181" x2="653.5" y2="197" stroke="#0f0"/><rect x="652.5" y="181.5" width="2" height="13" fill="#000" stroke="#0f0"/><line x1="657.5" y1="181" x2="657.5" y2="193" stroke="#0f0"/><rect x="656.5" y="184.5" width="2" height="6" fill="#fff" stroke="#0f0"/><line x1="661.5" y1="188" x2="661.5" y2="199" stroke="#0f0"/><rect x="660.5" y="188.5" width="2" height="6" fill="#fff" stroke="#0f0"/><line x1="665.5" y1="192" x2="665.5" y2="214" stroke="#0f0"/><rect x="664.5" y="199.5" width="2" height="6" fill="#fff" stroke="#0f0"/><line x1="669.5" y1="204" x2="669.5" y2="228" stroke="#0f0"/><rect x="668.5" y="205.5" width="2" height="20" fill="#000" stroke="#0f0"/><line x1="673.5" y1="198" x2="673.5" y2="220" stroke="#0f0"/><rect x="672.5" y="198.5" width="2" height="14" fill="#000" stroke="#0f0"/><line x1="677.5" y1="196" x2="677.5" y2="210" stroke="#0f0"/><rect x="676.5" y="197.5" width="2" height="11" fill="#000" stroke="#0f0"/><line x1="681.5" y1="184" x2="681.5" y2="203" stroke="#0f0"/><rect x="680.5" y="187.5" width="2" height="8" fill="#fff" stroke="#0f0"/><line x1="685.5" y1="188" x2="685.5" y2="214" stroke="#0f0"/><rect x="684.5" y="196.5" width="2" height="14" fill="#fff" stroke="#0f0"/><line x1="689.5" y1="202" x2="689.5" y2="216" stroke="#0f0"/><rect x="688.5" y="203.5" width="2" height="7" fill="#000" stroke="#0f0"/><line x1="693.5" y1="190" x2="693.5" y2="207" stroke="#0f0"/><rect x="692.5" y="194.5" width="2" height="8" fill="#000" stroke="#0f0"/><line x1="697.5" y1="192" x2="697.5" y2="205" stroke="#0f0"/><rect x="696.5" y="192.5" width="2" height="12" fill="#000" stroke="#0f0"/><line x1="701.5" y1="190" x2="701.5" y2="205" stroke="#0f0"/><rect x="700.5" y="194.5" width="2" height="8" fill="#000" stroke="#0f0"/><line x1="705.5" y1="188" x2="705.5" y2="207" stroke="#0f0"/><rect x="704.5" y="189.5" width="2" height="10" fill="#fff" stroke="#0f0"/><line x1="709.5" y1="202" x2="709.5" y2="218" stroke="#0f0"/><rect x="708.5" y="206.5" width="2" height="6" fill="#fff" stroke="#0f0"/><line x1="713.5" y1="213" x2="713.5" y2="235" stroke="#0f0"/><rect x="712.5" y="214.5" width="2" height="13" fill="#000" stroke="#0f0"/><line x1="717.5" y1="211" x2="717.5" y2="228" stroke="#0f0"/><rect x="716.5" y="211.5" width="2" height="10" fill="#000" stroke="#0f0"/><line x1="721.5" y1="200" x2="721.5" y2="216" stroke="#0f0"/><rect x="720.5" y="203.5" width="2" height="10" fill="#000" stroke="#0f0"/><line x1="725.5" y1="198" x2="725.5" y2="216" stroke="#0f0"/><rect x="724.5" y="202.5" width="2" height="7" fill="#fff" stroke="#0f0"/><line x1="729.5" y1="206" x2="729.5" y2="230" stroke="#0f0"/><rect x="728.5" y="208.5" width="2" height="20" fill="#000" stroke="#0f0"/><line x1="733.5" y1="204" x2="733.5" y2="228" stroke="#0f0"/><rect x="732.5" y="209.5" width="2" height="16" fill="#000" stroke="#0f0"/><line x1="737.5" y1="198" x2="737.5" y2="216" stroke="#0f0"/><rect x="736.5" y="199.5" width="2" height="15" fill="#000" stroke="#0f0"/><line x1="741.5" y1="200" x2="741.5" y2="210" stroke="#0f0"/><rect x="740.5" y="200.5" width="2" height="8" fill="#000" stroke="#0f0"/><line x1="745.5" y1="181" x2="745.5" y2="205" stroke="#0f0"/><rect x="744.5" y="184.5" width="2" height="17" fill="#000" stroke="#0f0"/><line x1="749.5" y1="169" x2="749.5" y2="185" stroke="#0f0"/><rect x="748.5" y="174.5" width="2" height="8" fill="#000" stroke="#0f0"/><line x1="753.5" y1="159" x2="753.5" y2="176" stroke="#0f0"/><rect x="752.5" y="162.5" width="2" height="12" fill="#000" stroke="#0f0"/><line x1="757.5" y1="161" x2="757.5" y2="172" stroke="#0f0"/><rect x="756.5" y="162.5" width="2" height="9" fill="#000" stroke="#0f0"/><line x1="761.5" y1="154" x2="761.5" y2="170" stroke="#0f0"/><rect x="760.5" y="156.5" width="2" height="13" fill="#fff" stroke="#0f0"/><line x1="765.5" y1="165" x2="765.5" y2="191" stroke="#0f0"/><rect x="764.5" y="172.5" width="2" height="12" fill="#fff" stroke="#0f0"/><line x1="769.5" y1="175" x2="769.5" y2="185" stroke="#0f0"/><rect x="768.5" y="176.5" width="2" height="6" fill="#000" stroke="#0f0"/><line x1="773.5" y1="165" x2="773.5" y2="182" stroke="#0f0"/><rect x="772.5" y="171.5" width="2" height="9" fill="#000" stroke="#0f0"/><line x1="777.5" y1="161" x2="777.5" y2="170" stroke="#0f0"/><rect x="776.5" y="164.5" width="2" height="4" fill="#fff" stroke="#0f0"/><line x1="781.5" y1="167" x2="781.5" y2="195" stroke="#0f0"/><rect x="780.5" y="172.5" width="2" height="13" fill="#000" stroke="#0f0"/><line x1="785.5" y1="175" x2="785.5" y2="182" stroke="#0f0"/><rect x="784.5" y="176.5" width="2" height="4" fill="#fff" stroke="#0f0"/><line x1="789.5" y1="169" x2="789.5" y2="189" stroke="#0f0"/><rect x="788.5" y="174.5" width="2" height="7" fill="#fff" stroke="#0f0"/><line x1="793.5" y1="179" x2="793.5" y2="199" stroke="#0f0"/><rect x="792.5" y="182.5" width="2" height="10" fill="#fff" stroke="#0f0"/><line x1="797.5" y1="188" x2="797.5" y2="199" stroke="#0f0"/><rect x="796.5" y="191.5" width="2" height="4" fill="#000" stroke="#0f0"/><line x1="801.5" y1="184" x2="801.5" y2="195" stroke="#0f0"/><rect x="800.5" y="186.5" width="2" height="7" fill="#000" stroke="#0f0"/><line x1="805.5" y1="181" x2="805.5" y2="189" stroke="#0f0"/><rect x="804.5" y="181.5" width="2" height="7" fill="#000" stroke="#0f0"/><line x1="809.5" y1="159" x2="809.5" y2="185" stroke="#0f0"/><rect x="808.5" y="160.5" width="2" height="17" fill="#000" stroke="#0f0"/><line x1="813.5" y1="129" x2="813.5" y2="162" stroke="#0f0"/><rect x="812.5" y="132.5" width="2" height="27" fill="#fff" stroke="#0f0"/><line x1="817.5" y1="138" x2="817.5" y2="168" stroke="#0f0"/><rect x="816.5" y="139.5" width="2" height="18" fill="#fff" stroke="#0f0"/><line x1="821.5" y1="150" x2="821.5" y2="166" stroke="#0f0"/><rect x="820.5" y="155.5" width="2" height="6" fill="#000" stroke="#0f0"/><line x1="825.5" y1="146" x2="825.5" y2="168" stroke="#0f0"/><rect x="824.5" y="148.5" width="2" height="17" fill="#fff" stroke="#0f0"/><line x1="829.5" y1="161" x2="829.5" y2="176" stroke="#0f0"/><rect x="828.5" y="163.5" width="2" height="9" fill="#000" stroke="#0f0"/><line x1="833.5" y1="163" x2="833.5" y2="174" stroke="#0f0"/><rect x="832.5" y="164.5" width="2" height="7" fill="#fff" stroke="#0f0"/><line x1="837.5" y1="163" x2="837.5" y2="178" stroke="#0f0"/><rect x="836.5" y="164.5" width="2" height="8" fill="#fff" stroke="#0f0"/><line x1="841.5" y1="173" x2="841.5" y2="180" stroke="#0f0"/><rect x="840.5" y="175.5" width="2" height="3" fill="#fff" stroke="#0f0"/><line x1="845.5" y1="173" x2="845.5" y2="188" stroke="#0f0"/><rect x="844.5" y="174.5" width="2" height="8" fill="#000" stroke="#0f0"/><line x1="849.5" y1="169" x2="849.5" y2="186" stroke="#0f0"/><rect x="848.5" y="171.5" width="2" height="12" fill="#fff" stroke="#0f0"/><line x1="853.5" y1="173" x2="853.5" y2="188" stroke="#0f0"/><rect x="852.5" y="173.5" width="2" height="12" fill="#fff" stroke="#0f0"/><line x1="857.5" y1="177" x2="857.5" y2="205" stroke="#0f0"/><rect x="856.5" y="182.5" width="2" height="17" fill="#fff" stroke="#0f0"/><line x1="861.5" y1="196" x2="861.5" y2="207" stroke="#0f0"/><rect x="860.5" y="197.5" width="2" height="7" fill="#fff" stroke="#0f0"/><line x1="865.5" y1="194" x2="865.5" y2="238" stroke="#0f0"/><rect x="864.5" y="194.5" width="2" height="38" fill="#fff" stroke="#0f0"/><line x1="869.5" y1="206" x2="869.5" y2="242" stroke="#0f0"/><rect x="868.5" y="207.5" width="2" height="28" fill="#fff" stroke="#0f0"/><line x1="873.5" y1="212" x2="873.5" y2="238" stroke="#0f0"/><rect x="872.5" y="212.5" width="2" height="25" fill="#fff" stroke="#0f0"/><line x1="877.5" y1="216" x2="877.5" y2="245" stroke="#0f0"/><rect x="876.5" y="219.5" width="2" height="22" fill="#fff" stroke="#0f0"/><line x1="881.5" y1="219" x2="881.5" y2="245" stroke="#0f0"/><rect x="880.5" y="225.5" width="2" height="14" fill="#000" stroke="#0f0"/><line x1="885.5" y1="198" x2="885.5" y2="232" stroke="#0f0"/><rect x="884.5" y="208.5" width="2" height="14" fill="#000" stroke="#0f0"/><line x1="889.5" y1="179" x2="889.5" y2="203" stroke="#0f0"/><rect x="888.5" y="186.5" width="2" height="8" fill="#000" stroke="#0f0"/><line x1="893.5" y1="175" x2="893.5" y2="188" stroke="#0f0"/><rect x="892.5" y="177.5" width="2" height="8" fill="#000" stroke="#0f0"/><line x1="897.5" y1="150" x2="897.5" y2="180" stroke="#0f0"/><rect x="896.5" y="161.5" width="2" height="16" fill="#000" stroke="#0f0"/><line x1="901.5" y1="148" x2="901.5" y2="172" stroke="#0f0"/><rect x="900.5" y="155.5" width="2" height="10" fill="#000" stroke="#0f0"/><line x1="905.5" y1="146" x2="905.5" y2="172" stroke="#0f0"/><rect x="904.5" y="146.5" width="2" height="17" fill="#000" stroke="#0f0"/><line x1="909.5" y1="123" x2="909.5" y2="172" stroke="#0f0"/><rect x="908.5" y="140.5" width="2" height="19" fill="#000" stroke="#0f0"/><line x1="913.5" y1="127" x2="913.5" y2="157" stroke="#0f0"/><rect x="912.5" y="136.5" width="2" height="11" fill="#fff" stroke="#0f0"/><line x1="917.5" y1="137" x2="917.5" y2="161" stroke="#0f0"/><rect x="916.5" y="138.5" width="2" height="17" fill="#000" stroke="#0f0"/><line x1="921.5" y1="129" x2="921.5" y2="161" stroke="#0f0"/><rect x="920.5" y="135.5" width="2" height="15" fill="#000" stroke="#0f0"/><line x1="925.5" y1="112" x2="925.5" y2="138" stroke="#0f0"/><rect x="924.5" y="120.5" width="2" height="9" fill="#000" stroke="#0f0"/><line x1="929.5" y1="96" x2="929.5" y2="115" stroke="#0f0"/><rect x="928.5" y="100.5" width="2" height="8" fill="#000" stroke="#0f0"/><line x1="933.5" y1="81" x2="933.5" y2="101" stroke="#0f0"/><rect x="932.5" y="86.5" width="2" height="9" fill="#000" stroke="#0f0"/><line x1="937.5" y1="62" x2="937.5" y2="90" stroke="#0f0"/><rect x="936.5" y="64.5" width="2" height="25" fill="#fff" stroke="#0f0"/><line x1="941.5" y1="71" x2="941.5" y2="97" stroke="#0f0"/><rect x="940.5" y="72.5" width="2" height="20" fill="#fff" stroke="#0f0"/><line x1="945.5" y1="89" x2="945.5" y2="107" stroke="#0f0"/><rect x="944.5" y="90.5" width="2" height="10" fill="#000" stroke="#0f0"/><line x1="949.5" y1="85" x2="949.5" y2="107" stroke="#0f0"/><rect x="948.5" y="90.5" width="2" height="11" fill="#000" stroke="#0f0"/><line x1="953.5" y1="87" x2="953.5" y2="105" stroke="#0f0"/><rect x="952.5" y="91.5" width="2" height="8" fill="#fff" stroke="#0f0"/><line x1="957.5" y1="94" x2="957.5" y2="109" stroke="#0f0"/><rect x="956.5" y="97.5" width="2" height="11" fill="#fff" stroke="#0f0"/><line x1="961.5" y1="96" x2="961.5" y2="111" stroke="#0f0"/><rect x="960.5" y="100.5" width="2" height="6" fill="#fff" stroke="#0f0"/><line x1="965.5" y1="98" x2="965.5" y2="117" stroke="#0f0"/><rect x="964.5" y="102.5" width="2" height="10" fill="#fff" stroke="#0f0"/><line x1="969.5" y1="108" x2="969.5" y2="132" stroke="#0f0"/><rect x="968.5" y="114.5" width="2" height="16" fill="#fff" stroke="#0f0"/><line x1="973.5" y1="121" x2="973.5" y2="157" stroke="#0f0"/><rect x="972.5" y="131.5" width="2" height="21" fill="#000" stroke="#0f0"/><line x1="977.5" y1="112" x2="977.5" y2="138" stroke="#0f0"/><rect x="976.5" y="113.5" width="2" height="21" fill="#fff" stroke="#0f0"/><line x1="981.5" y1="116" x2="981.5" y2="142" stroke="#0f0"/><rect x="980.5" y="123.5" width="2" height="16" fill="#000" stroke="#0f0"/><line x1="985.5" y1="96" x2="985.5" y2="126" stroke="#0f0"/><rect x="984.5" y="105.5" width="2" height="9" fill="#000" stroke="#0f0"/><line x1="989.5" y1="87" x2="989.5" y2="99" stroke="#0f0"/><rect x="988.5" y="89.5" width="2" height="7" fill="#fff" stroke="#0f0"/><line x1="993.5" y1="85" x2="993.5" y2="134" stroke="#0f0"/><rect x="992.5" y="94.5" width="2" height="26" fill="#fff" stroke="#0f0"/><line x1="997.5" y1="112" x2="997.5" y2="124" stroke="#0f0"/><rect x="996.5" y="115.5" width="2" height="5" fill="#fff" stroke="#0f0"/><line x1="1001.5" y1="112" x2="1001.5" y2="134" stroke="#0f0"/><rect x="1000.5" y="117.5" width="2" height="15" fill="#fff" stroke="#0f0"/><line x1="1005.5" y1="125" x2="1005.5" y2="136" stroke="#0f0"/><rect x="1004.5" y="126.5" width="2" height="8" fill="#000" stroke="#0f0"/><line x1="1009.5" y1="123" x2="1009.5" y2="138" stroke="#0f0"/><rect x="1008.5" y="127.5" width="2" height="8" fill="#000" stroke="#0f0"/><line x1="1013.5" y1="110" x2="1013.5" y2="138" stroke="#0f0"/><rect x="1012.5" y="116.5" width="2" height="21" fill="#000" stroke="#0f0"/><line x1="1017.5" y1="106" x2="1017.5" y2="128" stroke="#0f0"/><rect x="1016.5" y="107.5" width="2" height="18" fill="#000" stroke="#0f0"/><line x1="1021.5" y1="100" x2="1021.5" y2="115" stroke="#0f0"/><rect x="1020.5" y="104.5" width="2" height="6" fill="#fff" stroke="#0f0"/><line x1="1025.5" y1="96" x2="1025.5" y2="124" stroke="#0f0"/><rect x="1024.5" y="103.5" width="2" height="17" fill="#fff" stroke="#0f0"/><line x1="1029.5" y1="96" x2="1029.5" y2="132" stroke="#0f0"/><rect x="1028.5" y="103.5" width="2" height="21" fill="#fff" stroke="#0f0"/><line x1="1033.5" y1="102" x2="1033.5" y2="128" stroke="#0f0"/><rect x="1032.5" y="107.5" width="2" height="19" fill="#000" stroke="#0f0"/><line x1="1037.5" y1="94" x2="1037.5" y2="105" stroke="#0f0"/><rect x="1036.5" y="98.5" width="2" height="5" fill="#fff" stroke="#0f0"/><line x1="1041.5" y1="96" x2="1041.5" y2="115" stroke="#0f0"/><rect x="1040.5" y="103.5" width="2" height="4" fill="#fff" stroke="#0f0"/><line x1="1045.5" y1="114" x2="1045.5" y2="132" stroke="#0f0"/><rect x="1044.5" y="114.5" width="2" height="14" fill="#000" stroke="#0f0"/><line x1="1049.5" y1="114" x2="1049.5" y2="132" stroke="#0f0"/><rect x="1048.5" y="120.5" width="2" height="4" fill="#000" stroke="#0f0"/><line x1="1053.5" y1="108" x2="1053.5" y2="117" stroke="#0f0"/><rect x="1052.5" y="109.5" width="2" height="6" fill="#fff" stroke="#0f0"/><line x1="1057.5" y1="112" x2="1057.5" y2="132" stroke="#0f0"/><rect x="1056.5" y="114.5" width="2" height="10" fill="#fff" stroke="#0f0"/><line x1="1061.5" y1="121" x2="1061.5" y2="134" stroke="#0f0"/><rect x="1060.5" y="122.5" width="2" height="8" fill="#000" stroke="#0f0"/><line x1="1065.5" y1="112" x2="1065.5" y2="126" stroke="#0f0"/><rect x="1064.5" y="113.5" width="2" height="9" fill="#000" stroke="#0f0"/><line x1="1069.5" y1="96" x2="1069.5" y2="122" stroke="#0f0"/><rect x="1068.5" y="106.5" width="2" height="14" fill="#fff" stroke="#0f0"/><line x1="1073.5" y1="108" x2="1073.5" y2="122" stroke="#0f0"/><rect x="1072.5" y="112.5" width="2" height="6" fill="#000" stroke="#0f0"/><line x1="1077.5" y1="100" x2="1077.5" y2="111" stroke="#0f0"/><rect x="1076.5" y="104.5" width="2" height="3" fill="#000" stroke="#0f0"/><line x1="1081.5" y1="94" x2="1081.5" y2="117" stroke="#0f0"/><rect x="1080.5" y="96.5" width="2" height="12" fill="#fff" stroke="#0f0"/><line x1="1085.5" y1="98" x2="1085.5" y2="122" stroke="#0f0"/><rect x="1084.5" y="102.5" width="2" height="19" fill="#fff" stroke="#0f0"/><line x1="1089.5" y1="100" x2="1089.5" y2="149" stroke="#0f0"/><rect x="1088.5" y="100.5" width="2" height="39" fill="#fff" stroke="#0f0"/><line x1="1093.5" y1="108" x2="1093.5" y2="149" stroke="#0f0"/><rect x="1092.5" y="115.5" width="2" height="28" fill="#000" stroke="#0f0"/><line x1="1097.5" y1="108" x2="1097.5" y2="147" stroke="#0f0"/><rect x="1096.5" y="110.5" width="2" height="31" fill="#fff" stroke="#0f0"/><line x1="1101.5" y1="136" x2="1101.5" y2="148" stroke="#0f0"/><rect x="1100.5" y="137.5" width="2" height="6" fill="#000" stroke="#0f0"/><line x1="1105.5" y1="136" x2="1105.5" y2="140" stroke="#0f0"/><rect x="1104.5" y="136.5" width="2" height="3" fill="#000" stroke="#0f0"/><line x1="1109.5" y1="108" x2="1109.5" y2="135" stroke="#0f0"/><rect x="1108.5" y="108.5" width="2" height="18" fill="#fff" stroke="#0f0"/><line x1="1113.5" y1="117" x2="1113.5" y2="144" stroke="#0f0"/><rect x="1112.5" y="126.5" width="2" height="16" fill="#fff" stroke="#0f0"/><line x1="1117.5" y1="143" x2="1117.5" y2="149" stroke="#0f0"/><rect x="1116.5" y="145.5" width="2" height="2" fill="#fff" stroke="#0f0"/><line x1="1121.5" y1="148" x2="1121.5" y2="188" stroke="#0f0"/><rect x="1120.5" y="162.5" width="2" height="20" fill="#fff" stroke="#0f0"/><line x1="1125.5" y1="172" x2="1125.5" y2="187" stroke="#0f0"/><rect x="1124.5" y="174.5" width="2" height="10" fill="#000" stroke="#0f0"/><line x1="1129.5" y1="170" x2="1129.5" y2="177" stroke="#0f0"/><rect x="1128.5" y="172.5" width="2" height="3" fill="#fff" stroke="#0f0"/><line x1="1133.5" y1="176" x2="1133.5" y2="179" stroke="#0f0"/><rect x="1132.5" y="176.5" width="2" height="2" fill="#fff" stroke="#0f0"/><line x1="1137.5" y1="176" x2="1137.5" y2="188" stroke="#0f0"/><rect x="1136.5" y="178.5" width="2" height="7" fill="#fff" stroke="#0f0"/><line x1="1141.5" y1="186" x2="1141.5" y2="197" stroke="#0f0"/><rect x="1140.5" y="187.5" width="2" height="9" fill="#fff" stroke="#0f0"/><line x1="1145.5" y1="192" x2="1145.5" y2="199" stroke="#0f0"/><rect x="1144.5" y="192.5" width="2" height="4" fill="#000" stroke="#0f0"/><line x1="1149.5" y1="189" x2="1149.5" y2="192" stroke="#0f0"/><rect x="1148.5" y="189.5" width="2" height="2" fill="#fff" stroke="#0f0"/><line x1="1153.5" y1="189" x2="1153.5" y2="216" stroke="#0f0"/><rect x="1152.5" y="192.5" width="2" height="13" fill="#fff" stroke="#0f0"/><line x1="1157.5" y1="215" x2="1157.5" y2="223" stroke="#0f0"/><rect x="1156.5" y="216.5" width="2" height="5" fill="#000" stroke="#0f0"/><line x1="1161.5" y1="211" x2="1161.5" y2="222" stroke="#0f0"/><rect x="1160.5" y="213.5" width="2" height="7" fill="#fff" stroke="#0f0"/><line x1="1165.5" y1="211" x2="1165.5" y2="231" stroke="#0f0"/><rect x="1164.5" y="214.5" width="2" height="9" fill="#000" stroke="#0f0"/><line x1="1169.5" y1="209" x2="1169.5" y2="231" stroke="#0f0"/><rect x="1168.5" y="216.5" width="2" height="7" fill="#000" stroke="#0f0"/><line x1="1173.5" y1="208" x2="1173.5" y2="222" stroke="#0f0"/><rect x="1172.5" y="211.5" width="2" height="5" fill="#fff" stroke="#0f0"/><line x1="1177.5" y1="213" x2="1177.5" y2="221" stroke="#0f0"/><rect x="1176.5" y="216.5" width="2" height="2" fill="#000" stroke="#0f0"/><line x1="1181.5" y1="165" x2="1181.5" y2="213" stroke="#0f0"/><rect x="1180.5" y="179.5" width="2" height="32" fill="#000" stroke="#0f0"/><line x1="1185.5" y1="160" x2="1185.5" y2="167" stroke="#0f0"/><rect x="1184.5" y="162.5" width="2" height="3" fill="#000" stroke="#0f0"/><line x1="1189.5" y1="144" x2="1189.5" y2="158" stroke="#0f0"/><rect x="1188.5" y="148.5" width="2" height="6" fill="#000" stroke="#0f0"/><g font-family='"Liberation Sans"' font-size="9.2" fill="#fff" stroke="#fff" stroke-width="0.25"><line x1="1327" y1="36.5" x2="1330" y2="36.5" stroke="#fff"/><text x="1332" y="40">3686.00</text><line x1="1327" y1="69.5" x2="1330" y2="69.5" stroke="#fff"/><text x="1332" y="73">3685.05</text><line x1="1327" y1="103.5" x2="1330" y2="103.5" stroke="#fff"/><text x="1332" y="107">3684.10</text><line x1="1327" y1="136.5" x2="1330" y2="136.5" stroke="#fff"/><text x="1332" y="140">3683.15</text><line x1="1327" y1="170.5" x2="1330" y2="170.5" stroke="#fff"/><text x="1332" y="174">3682.20</text><line x1="1327" y1="203.5" x2="1330" y2="203.5" stroke="#fff"/><text x="1332" y="207">3681.25</text><line x1="1327" y1="237.5" x2="1330" y2="237.5" stroke="#fff"/><text x="1332" y="241">3680.30</text><line x1="1327" y1="270.5" x2="1330" y2="270.5" stroke="#fff"/><text x="1332" y="274">3679.35</text><line x1="1327" y1="303.5" x2="1330" y2="303.5" stroke="#fff"/><text x="1332" y="307">3678.40</text><line x1="1327" y1="337.5" x2="1330" y2="337.5" stroke="#fff"/><text x="1332" y="341">3677.45</text><line x1="1327" y1="370.5" x2="1330" y2="370.5" stroke="#fff"/><text x="1332" y="374">3676.50</text><line x1="1327" y1="404.5" x2="1330" y2="404.5" stroke="#fff"/><text x="1332" y="408">3675.55</text><line x1="1327" y1="437.5" x2="1330" y2="437.5" stroke="#fff"/><text x="1332" y="441">3674.60</text></g><rect x="1328" y="139" width="38" height="11" fill="#fff"/><text x="1332" y="148" font-family='"Liberation Sans"' font-size="9.2" fill="#000">3682.94</text><path d="M1189 4 L1199 4 L1194 9 Z" fill="#a0a8b8"/><g font-family='"Liberation Sans"' font-size="9.2" fill="#fff" stroke="#fff" stroke-width="0.25"><line x1="9.5" y1="441" x2="9.5" y2="446" stroke="#fff"/><text x="8" y="454">16 Sep 2025</text><line x1="73.5" y1="441" x2="73.5" y2="446" stroke="#fff"/><text x="72" y="454">16 Sep 04:18</text><line x1="137.5" y1="441" x2="137.5" y2="446" stroke="#fff"/><text x="136" y="454">16 Sep 04:34</text><line x1="201.5" y1="441" x2="201.5" y2="446" stroke="#fff"/><text x="200" y="454">16 Sep 04:50</text><line x1="265.5" y1="441" x2="265.5" y2="446" stroke="#fff"/><text x="264" y="454">16 Sep 05:06</text><line x1="329.5" y1="441" x2="329.5" y2="446" stroke="#fff"/><text x="328" y="454">16 Sep 05:22</text><line x1="393.5" y1="441" x2="393.5" y2="446" stroke="#fff"/><text x="392" y="454">16 Sep 05:38</text><line x1="457.5" y1="441" x2="457.5" y2="446" stroke="#fff"/><text x="456" y="454">16 Sep 05:54</text><line x1="521.5" y1="441" x2="521.5" y2="446" stroke="#fff"/><text x="520" y="454">16 Sep 06:10</text><line x1="585.5" y1="441" x2="585.5" y2="446" stroke="#fff"/><text x="584" y="454">16 Sep 06:26</text><line x1="649.5" y1="441" x2="649.5" y2="446" stroke="#fff"/><text x="648" y="454">16 Sep 06:42</text><line x1="713.5" y1="441" x2="713.5" y2="446" stroke="#fff"/><text x="712" y="454">16 Sep 06:58</text><line x1="777.5" y1="441" x2="777.5" y2="446" stroke="#fff"/><text x="776" y="454">16 Sep 07:14</text><line x1="841.5" y1="441" x2="841.5" y2="446" stroke="#fff"/><text x="840" y="454">16 Sep 07:30</text><line x1="905.5" y1="441" x2="905.5" y2="446" stroke="#fff"/><text x="904" y="454">16 Sep 07:46</text><line x1="969.5" y1="441" x2="969.5" y2="446" stroke="#fff"/><text x="968" y="454">16 Sep 08:02</text><line x1="1033.5" y1="441" x2="1033.5" y2="446" stroke="#fff"/><text x="1032" y="454">16 Sep 08:18</text><line x1="1097.5" y1="441" x2="1097.5" y2="446" stroke="#fff"/><text x="1096" y="454">16 Sep 08:34</text><line x1="1161.5" y1="441" x2="1161.5" y2="446" stroke="#fff"/><text x="1160" y="454">16 Sep 08:50</text></g></svg>
<svg class="a" style="left:12px;top:115px" width="8" height="6" viewBox="0 0 8 6" ><path d="M0 6L4 1L8 6Z" fill="#fff"/></svg><div class="t" style="left:23px;top:113px;font-size:9.3px;color:#fff">XAUUSD,M1&nbsp; 3682.55 3682.97 3682.30 3682.94</div><div class="a" style="left:12px;top:127px;width:46px;height:22px;background:linear-gradient(#fb5a5a,#e83030)"></div><div class="a" style="left:16px;top:148px;width:38px;height:1px;background:#8a1010"></div><div class="a" style="left:16px;top:149px;width:38px;height:1px;background:#f07070"></div><div class="t" style="left:12px;top:132px;width:46px;text-align:center;font-size:12px;color:#fff;transform:scaleX(0.84)">SELL</div><div class="a" style="left:12px;top:149px;width:96px;height:34px;background:linear-gradient(#d82828,#b00808)"></div><div class="t" style="left:28px;top:167px;font-size:12px;font-weight:bold;color:#fff">3682</div><div class="t" style="left:60px;top:151px;font-size:30.5px;color:#fff">94</div><div class="a" style="left:59px;top:127px;width:98px;height:20px;background:#000"></div><div class="a" style="left:60px;top:128px;width:19px;height:18px;background:linear-gradient(#f4f4f4,#d8d8d8)"></div><svg class="a" style="left:66px;top:135px" width="7" height="4" viewBox="0 0 7 4" ><path d="M0 0H7L3.5 3.5Z" fill="#000"/></svg><div class="a" style="left:80px;top:128px;width:57px;height:18px;background:#fff"></div><div class="t" style="left:80px;top:131px;width:54px;text-align:right;font-size:11.5px;color:#000">0.02</div><div class="a" style="left:137px;top:128px;width:19px;height:18px;background:linear-gradient(#f4f4f4,#d8d8d8)"></div><svg class="a" style="left:143px;top:134px" width="7" height="4" viewBox="0 0 7 4" ><path d="M0 3.5H7L3.5 0Z" fill="#000"/></svg><div class="a" style="left:160px;top:127px;width:45px;height:22px;background:linear-gradient(#fb5a5a,#e83030)"></div><div class="a" style="left:163px;top:148px;width:38px;height:1px;background:#8a1010"></div><div class="a" style="left:163px;top:149px;width:38px;height:1px;background:#f07070"></div><div class="t" style="left:160px;top:132px;width:45px;text-align:center;font-size:12px;color:#fff;transform:scaleX(0.84)">BUY</div><div class="a" style="left:110px;top:149px;width:95px;height:34px;background:linear-gradient(#d82828,#b00808)"></div><div class="t" style="left:126px;top:167px;font-size:12px;font-weight:bold;color:#fff">3683</div><div class="t" style="left:158px;top:151px;font-size:30.5px;color:#fff">12</div>
<div class="a" style="left:4px;top:568px;width:1362px;height:142px;background:#f0f0f0"></div><svg class="a" style="left:8px;top:576px" width="7" height="6" viewBox="0 0 7 6" ><path d="M0.5 0.5L6.5 5.5M6.5 0.5L0.5 5.5" stroke="#000" stroke-width="1.6"/></svg><div class="a" style="left:5px;top:587px;width:13px;height:123px;background:linear-gradient(#c4d6ec,#a9c2de)"></div><div class="t" style="left:7px;top:707px;transform:rotate(-90deg);transform-origin:0 0;font-size:11px;color:#1a2a3a">Terminal</div><div class="a" style="left:19px;top:573px;width:1347px;height:114px;background:#fff;border-left:1px solid #a0a0a0;border-top:1px solid #a0a0a0"></div><div class="a" style="left:151px;top:574px;width:1px;height:24px;background:#e5e5e5"></div><div class="a" style="left:334px;top:574px;width:1px;height:24px;background:#e5e5e5"></div><div class="a" style="left:425px;top:574px;width:1px;height:24px;background:#e5e5e5"></div><div class="a" style="left:496px;top:574px;width:1px;height:24px;background:#e5e5e5"></div><div class="a" style="left:587px;top:574px;width:1px;height:24px;background:#e5e5e5"></div><div class="a" style="left:688px;top:574px;width:1px;height:24px;background:#e5e5e5"></div><div class="a" style="left:789px;top:574px;width:1px;height:24px;background:#e5e5e5"></div><div class="a" style="left:890px;top:574px;width:1px;height:24px;background:#e5e5e5"></div><div class="a" style="left:991px;top:574px;width:1px;height:24px;background:#e5e5e5"></div><div class="a" style="left:1092px;top:574px;width:1px;height:24px;background:#e5e5e5"></div><div class="a" style="left:1193px;top:574px;width:1px;height:24px;background:#e5e5e5"></div><div class="t" style="left:26px;top:580px;font-size:12px">Order</div><div class="t" style="left:69px;top:582px;font-size:9px;font-style:italic;color:#999">/</div><div class="t" style="left:229px;top:580px;width:100px;text-align:right;font-size:12px">Time</div><div class="t" style="left:320px;top:580px;width:100px;text-align:right;font-size:12px">Type</div><div class="t" style="left:391px;top:580px;width:100px;text-align:right;font-size:12px">Size</div><div class="t" style="left:482px;top:580px;width:100px;text-align:right;font-size:12px">Symbol</div><div class="t" style="left:583px;top:580px;width:100px;text-align:right;font-size:12px">Price</div><div class="t" style="left:684px;top:580px;width:100px;text-align:right;font-size:12px">S / L</div><div class="t" style="left:785px;top:580px;width:100px;text-align:right;font-size:12px">T / P</div><div class="t" style="left:886px;top:580px;width:100px;text-align:right;font-size:12px">Price</div><div class="t" style="left:987px;top:580px;width:100px;text-align:right;font-size:12px">Commission</div><div class="t" style="left:1088px;top:580px;width:100px;text-align:right;font-size:12px">Swap</div><div class="t" style="left:1247px;top:580px;width:100px;text-align:right;font-size:12px">Profit</div><div class="a" style="left:20px;top:598px;width:1333px;height:20px;background:#c8c8c8"></div><svg class="a" style="left:23px;top:601px" width="12" height="14" viewBox="0 0 12 14" ><rect x="0.5" y="0.5" width="11" height="13" rx="1" fill="#fff" stroke="#666"/><path d="M6 3L9.5 7H7.5V10H4.5V7H2.5Z" fill="#1a9a1a"/></svg><div class="t" style="left:42px;top:601px;font-size:12px;font-weight:bold;letter-spacing:-0.15px">Balance: 36.29 USD&nbsp; Equity: 39.91&nbsp; Margin: 14.72&nbsp; Free margin: 25.19&nbsp; Margin level: 271.05%</div><div class="t" style="left:1229px;top:601px;width:100px;text-align:right;font-size:12px;font-weight:bold">3.62</div><div class="a" style="left:20px;top:618px;width:1333px;height:20px;background:#0078d7;border-bottom:1px solid #0078d7"></div><div class="a" style="left:150px;top:618px;width:1px;height:20px;background:#3a98e0"></div><div class="a" style="left:333px;top:618px;width:1px;height:20px;background:#3a98e0"></div><div class="a" style="left:424px;top:618px;width:1px;height:20px;background:#3a98e0"></div><div class="a" style="left:495px;top:618px;width:1px;height:20px;background:#3a98e0"></div><div class="a" style="left:586px;top:618px;width:1px;height:20px;background:#3a98e0"></div><div class="a" style="left:687px;top:618px;width:1px;height:20px;background:#3a98e0"></div><div class="a" style="left:788px;top:618px;width:1px;height:20px;background:#3a98e0"></div><div class="a" style="left:889px;top:618px;width:1px;height:20px;background:#3a98e0"></div><div class="a" style="left:990px;top:618px;width:1px;height:20px;background:#3a98e0"></div><div class="a" style="left:1192px;top:618px;width:1px;height:20px;background:#3a98e0"></div><svg class="a" style="left:23px;top:620px" width="15" height="16" viewBox="0 0 15 16" ><path d="M1.5 0.5h7l3 3v10h-10z" fill="#fff" stroke="#555"/><path d="M8.5 0.5v3h3" fill="none" stroke="#555"/><circle cx="11" cy="12" r="3.5" fill="#1e8ee8" stroke="#0a5aa8" stroke-width="0.6"/></svg><div class="t" style="left:42px;top:622px;font-size:11px;color:#fff">43299075</div><div class="t" style="left:179px;top:622px;width:150px;text-align:right;font-size:11px;color:#fff">2025.09.11 18:41:51</div><div class="t" style="left:270px;top:622px;width:150px;text-align:right;font-size:11px;color:#fff">buy limit</div><div class="t" style="left:341px;top:622px;width:150px;text-align:right;font-size:11px;color:#fff">0.01</div><div class="t" style="left:432px;top:622px;width:150px;text-align:right;font-size:11px;color:#fff">xauusd</div><div class="t" style="left:535px;top:622px;width:150px;text-align:right;font-size:11px;color:#fff">3615.00</div><div class="t" style="left:636px;top:622px;width:150px;text-align:right;font-size:11px;color:#fff">3612.00</div><div class="t" style="left:736px;top:622px;width:150px;text-align:right;font-size:11px;color:#fff">0.00</div><div class="t" style="left:837px;top:622px;width:150px;text-align:right;font-size:11px;color:#fff">3683.12</div><svg class="a" style="left:1339px;top:624px" width="8" height="8" viewBox="0 0 8 8" ><path d="M1 1L7 7M7 1L1 7" stroke="#b4b4b4" stroke-width="1.9"/></svg><div class="a" style="left:20px;top:638px;width:1333px;height:20px;background:#ebebeb;border-bottom:1px solid #dadada"></div><div class="a" style="left:150px;top:638px;width:1px;height:20px;background:#d8d8d8"></div><div class="a" style="left:333px;top:638px;width:1px;height:20px;background:#d8d8d8"></div><div class="a" style="left:424px;top:638px;width:1px;height:20px;background:#d8d8d8"></div><div class="a" style="left:495px;top:638px;width:1px;height:20px;background:#d8d8d8"></div><div class="a" style="left:586px;top:638px;width:1px;height:20px;background:#d8d8d8"></div><div class="a" style="left:687px;top:638px;width:1px;height:20px;background:#d8d8d8"></div><div class="a" style="left:788px;top:638px;width:1px;height:20px;background:#d8d8d8"></div><div class="a" style="left:889px;top:638px;width:1px;height:20px;background:#d8d8d8"></div><div class="a" style="left:990px;top:638px;width:1px;height:20px;background:#d8d8d8"></div><div class="a" style="left:1192px;top:638px;width:1px;height:20px;background:#d8d8d8"></div><svg class="a" style="left:23px;top:640px" width="15" height="16" viewBox="0 0 15 16" ><path d="M1.5 0.5h7l3 3v10h-10z" fill="#fff" stroke="#555"/><path d="M8.5 0.5v3h3" fill="none" stroke="#555"/><circle cx="11" cy="12" r="3.5" fill="#1e8ee8" stroke="#0a5aa8" stroke-width="0.6"/></svg><div class="t" style="left:42px;top:642px;font-size:11px;color:#000">43370320</div><div class="t" style="left:179px;top:642px;width:150px;text-align:right;font-size:11px;color:#000">2025.09.15 16:38:39</div><div class="t" style="left:270px;top:642px;width:150px;text-align:right;font-size:11px;color:#000">buy limit</div><div class="t" style="left:341px;top:642px;width:150px;text-align:right;font-size:11px;color:#000">0.03</div><div class="t" style="left:432px;top:642px;width:150px;text-align:right;font-size:11px;color:#000">xauusd</div><div class="t" style="left:535px;top:642px;width:150px;text-align:right;font-size:11px;color:#000">3647.83</div><div class="t" style="left:636px;top:642px;width:150px;text-align:right;font-size:11px;color:#000">3646.05</div><div class="t" style="left:736px;top:642px;width:150px;text-align:right;font-size:11px;color:#000">0.00</div><div class="t" style="left:837px;top:642px;width:150px;text-align:right;font-size:11px;color:#000">3683.12</div><svg class="a" style="left:1339px;top:644px" width="8" height="8" viewBox="0 0 8 8" ><path d="M1 1L7 7M7 1L1 7" stroke="#8a8a8a" stroke-width="1.9"/></svg><div class="a" style="left:20px;top:658px;width:1333px;height:20px;background:#fff;border-bottom:1px solid #dadada"></div><div class="a" style="left:150px;top:658px;width:1px;height:20px;background:#d8d8d8"></div><div class="a" style="left:333px;top:658px;width:1px;height:20px;background:#d8d8d8"></div><div class="a" style="left:424px;top:658px;width:1px;height:20px;background:#d8d8d8"></div><div class="a" style="left:495px;top:658px;width:1px;height:20px;background:#d8d8d8"></div><div class="a" style="left:586px;top:658px;width:1px;height:20px;background:#d8d8d8"></div><div class="a" style="left:687px;top:658px;width:1px;height:20px;background:#d8d8d8"></div><div class="a" style="left:788px;top:658px;width:1px;height:20px;background:#d8d8d8"></div><div class="a" style="left:889px;top:658px;width:1px;height:20px;background:#d8d8d8"></div><div class="a" style="left:990px;top:658px;width:1px;height:20px;background:#d8d8d8"></div><div class="a" style="left:1192px;top:658px;width:1px;height:20px;background:#d8d8d8"></div><svg class="a" style="left:23px;top:660px" width="15" height="16" viewBox="0 0 15 16" ><path d="M1.5 0.5h7l3 3v10h-10z" fill="#fff" stroke="#555"/><path d="M8.5 0.5v3h3" fill="none" stroke="#555"/><circle cx="11" cy="12" r="3.5" fill="#1e8ee8" stroke="#0a5aa8" stroke-width="0.6"/></svg><div class="t" style="left:42px;top:662px;font-size:11px;color:#000">43383101</div><div class="t" style="left:179px;top:662px;width:150px;text-align:right;font-size:11px;color:#000">2025.09.15 21:50:00</div><div class="t" style="left:270px;top:662px;width:150px;text-align:right;font-size:11px;color:#000">buy limit</div><div class="t" style="left:341px;top:662px;width:150px;text-align:right;font-size:11px;color:#000">0.02</div><div class="t" style="left:432px;top:662px;width:150px;text-align:right;font-size:11px;color:#000">xauusd</div><div class="t" style="left:535px;top:662px;width:150px;text-align:right;font-size:11px;color:#000">3675.00</div><div class="t" style="left:636px;top:662px;width:150px;text-align:right;font-size:11px;color:#000">3673.00</div><div class="t" style="left:736px;top:662px;width:150px;text-align:right;font-size:11px;color:#000">0.00</div><div class="t" style="left:837px;top:662px;width:150px;text-align:right;font-size:11px;color:#000">3683.12</div><svg class="a" style="left:1339px;top:664px" width="8" height="8" viewBox="0 0 8 8" ><path d="M1 1L7 7M7 1L1 7" stroke="#8a8a8a" stroke-width="1.9"/></svg><div class="a" style="left:1353px;top:574px;width:13px;height:113px;background:#f0f0f0"></div><svg class="a" style="left:1355px;top:580px" width="10" height="6" viewBox="0 0 10 6" ><path d="M1 5L5 1L9 5" stroke="#333" fill="none" stroke-width="1.3"/></svg><div class="a" style="left:1354px;top:607px;width:12px;height:63px;background:#cdcdcd"></div><svg class="a" style="left:1356px;top:676px" width="10" height="6" viewBox="0 0 10 6" ><path d="M1 1L5 5L9 1" stroke="#444" fill="none" stroke-width="1.6"/></svg><svg class="a" style="left:0px;top:0px" width="210" height="700" viewBox="0 0 210 700" ><path d="M105 661 L134 661 C140 662 144 663.7 147 663.7 L179 663.7 L179 657.3 L175 657.3 L175 641 L181 641 L181 643.7 L186 643.7 C191 646 195 650 196.5 656 L197.5 666 L197.5 681 C197.5 684 195 686 191 686.5 L175 688.3 L167.5 688.3 L167 680 L145 680 C138 680 133 677.4 129 677.4 L105 677.4 Z" fill="#6a0ad0"/></svg><div class="a" style="left:19px;top:687px;width:1347px;height:1px;background:#000"></div><div class="a" style="left:19px;top:688px;width:1347px;height:20px;background:#f0f0f0"></div><div class="a" style="left:22px;top:687px;width:49px;height:20px;background:#fff;border:1px solid #000;border-top:none"></div><div class="t" style="left:32px;top:692px;font-size:11.2px">Trade</div><div class="t" style="left:81px;top:692px;font-size:12px;color:#6d6d6d">Exposure</div><div class="t" style="left:149px;top:692px;font-size:12px;color:#6d6d6d">Account History</div><div class="t" style="left:255px;top:692px;font-size:12px;color:#6d6d6d">News</div><div class="t" style="left:304px;top:692px;font-size:12px;color:#6d6d6d">Alerts</div><div class="t" style="left:354px;top:692px;font-size:12px;color:#6d6d6d">Mailbox</div><div class="t" style="left:429px;top:692px;font-size:12px;color:#6d6d6d">Company</div><div class="t" style="left:501px;top:692px;font-size:12px;color:#6d6d6d">Market</div><div class="t" style="left:575px;top:692px;font-size:12px;color:#6d6d6d">Signals</div><div class="t" style="left:632px;top:692px;font-size:12px;color:#6d6d6d">Articles</div><div class="t" style="left:691px;top:692px;font-size:12px;color:#6d6d6d">Code Base</div><div class="t" style="left:766px;top:692px;font-size:12px;color:#6d6d6d">Experts</div><div class="t" style="left:823px;top:692px;font-size:12px;color:#6d6d6d">Journal</div><div class="a" style="left:139px;top:691px;width:1px;height:14px;background:#555"></div><div class="a" style="left:245px;top:691px;width:1px;height:14px;background:#555"></div><div class="a" style="left:294px;top:691px;width:1px;height:14px;background:#555"></div><div class="a" style="left:344px;top:691px;width:1px;height:14px;background:#555"></div><div class="a" style="left:419px;top:691px;width:1px;height:14px;background:#555"></div><div class="a" style="left:491px;top:691px;width:1px;height:14px;background:#555"></div><div class="a" style="left:565px;top:691px;width:1px;height:14px;background:#555"></div><div class="a" style="left:622px;top:691px;width:1px;height:14px;background:#555"></div><div class="a" style="left:681px;top:691px;width:1px;height:14px;background:#555"></div><div class="a" style="left:756px;top:691px;width:1px;height:14px;background:#555"></div><div class="a" style="left:814px;top:691px;width:1px;height:14px;background:#555"></div><div class="a" style="left:872px;top:691px;width:1px;height:14px;background:#555"></div><div class="t" style="left:399px;top:698px;font-size:9px;font-weight:bold;color:#e02020">10</div><div class="t" style="left:540px;top:698px;font-size:9px;font-weight:bold;color:#e02020">128</div><div class="a" style="left:4px;top:708px;width:1362px;height:1px;background:#d8d8d8"></div>
<div class="a" style="left:4px;top:712px;width:1362px;height:1px;background:#a0a0a0"></div><div class="a" style="left:4px;top:713px;width:1362px;height:15px;background:#f0f0f0"></div><div class="t" style="left:6px;top:720px;font-size:12px">For Help, press F1</div><div class="a" style="left:660px;top:714px;width:1px;height:14px;background:#b8b8b8"></div><div class="a" style="left:778px;top:714px;width:1px;height:14px;background:#b8b8b8"></div><div class="a" style="left:879px;top:714px;width:1px;height:14px;background:#b8b8b8"></div><div class="a" style="left:950px;top:714px;width:1px;height:14px;background:#b8b8b8"></div><div class="a" style="left:1021px;top:714px;width:1px;height:14px;background:#b8b8b8"></div><div class="a" style="left:1089px;top:714px;width:1px;height:14px;background:#b8b8b8"></div><div class="a" style="left:1159px;top:714px;width:1px;height:14px;background:#b8b8b8"></div><div class="a" style="left:1225px;top:714px;width:1px;height:14px;background:#b8b8b8"></div><div class="t" style="left:667px;top:720px;font-size:12px">Default</div><svg class="a" style="left:1231px;top:717px" width="22" height="11" viewBox="0 0 22 11" ><rect x="0" y="0" width="2" height="11" fill="#6a9a2a"/><rect x="3" y="0" width="2" height="11" fill="#6a9a2a"/><rect x="6" y="0" width="2" height="11" fill="#6a9a2a"/><rect x="9" y="0" width="2" height="11" fill="#6a9a2a"/><rect x="12" y="0" width="2" height="11" fill="#335"/><rect x="15" y="0" width="2" height="11" fill="#335"/><rect x="18" y="0" width="2" height="11" fill="#335"/></svg><div class="t" style="left:1257px;top:720px;font-size:12px">477/2 kb</div>
<div class="a" style="left:0;top:728px;width:1366px;height:40px;background:#212d33"></div><svg class="a" style="left:16px;top:740px" width="16" height="16" viewBox="0 0 16 16" ><path d="M0 2.2L6.5 1.3V7.4H0Z M7.4 1.2L16 0V7.4H7.4Z M0 8.4H6.5V14.6L0 13.8Z M7.4 8.4H16V16L7.4 14.8Z" fill="#fff"/></svg><div class="a" style="left:48px;top:728px;width:288px;height:40px;background:#f2f2f2;border:1px solid #d0d0d0"></div><svg class="a" style="left:60px;top:741px" width="17" height="16" viewBox="0 0 17 16" ><circle cx="10.5" cy="6" r="5" fill="none" stroke="#222" stroke-width="1.4"/><path d="M7 9.5L1 15.5" stroke="#222" stroke-width="1.5"/></svg><div class="t" style="left:88px;top:742px;font-size:14.4px;color:#333">Type here to search</div><svg class="a" style="left:263px;top:736px" width="62" height="26" viewBox="0 0 62 26" ><path d="M25 1 C26 9 29 12 37 13 C29 14 26 17 25 25 C24 17 21 14 13 13 C21 12 24 9 25 1Z" fill="#f7c52a"/><path d="M48 11 C48.5 15 50 16.5 54 17 C50 17.5 48.5 19 48 23 C47.5 19 46 17.5 42 17 C46 16.5 47.5 15 48 11Z" fill="#f7c52a"/><path d="M6 15 C6.3 18 7 19 10 19.5 C7 20 6.3 21 6 24 C5.7 21 5 20 2 19.5 C5 19 5.7 18 6 15Z" fill="#2a9ae8"/><circle cx="41" cy="3" r="2" fill="#f06a2a"/><circle cx="60" cy="21" r="1.8" fill="#6ac84a"/></svg><svg class="a" style="left:351px;top:740px" width="18" height="17" viewBox="0 0 18 17" ><rect x="1" y="3" width="12" height="11" fill="none" stroke="#fff" stroke-width="1.3"/><path d="M0 1H14M0 16H14M16 2V4M16 6V15" stroke="#fff" stroke-width="1.3"/></svg><svg class="a" style="left:399px;top:736px" width="25" height="25" viewBox="0 0 25 25" ><circle cx="12.5" cy="12.5" r="11.5" fill="#1a8ad8"/><path d="M3 9 C6 2 18 1 22 8 C24 13 20 15 16 14 C12 13 12 10 8 10 C5 10 3 13 3 15Z" fill="#5ed06a"/><circle cx="7" cy="19" r="5" fill="#c8c8c8"/><circle cx="7" cy="17.5" r="2" fill="#888"/></svg><svg class="a" style="left:447px;top:736px" width="24" height="25" viewBox="0 0 24 25" ><path d="M7 6 V3 C7 0.5 17 0.5 17 3 V6" fill="none" stroke="#2a90e0" stroke-width="2"/><rect x="1" y="6" width="22" height="18" rx="2.5" fill="#fff"/><rect x="7" y="10" width="4.5" height="4.5" fill="#f25022"/><rect x="12.5" y="10" width="4.5" height="4.5" fill="#7fba00"/><rect x="7" y="15.5" width="4.5" height="4.5" fill="#00a4ef"/><rect x="12.5" y="15.5" width="4.5" height="4.5" fill="#ffb900"/></svg><svg class="a" style="left:497px;top:738px" width="24" height="21" viewBox="0 0 24 21" ><path d="M0 2 H8 L10 4 H24 V21 H0Z" fill="#e8b830"/><rect x="0" y="6" width="24" height="15" fill="#fcd45a"/><path d="M6 21 V14 H18 V21 H14 V17 H10 V21Z" fill="#2a7ad0"/></svg><svg class="a" style="left:545px;top:736px" width="25" height="25" viewBox="0 0 25 25" ><circle cx="12.5" cy="12.5" r="12" fill="#fff"/><circle cx="12.5" cy="12" r="7.5" fill="none" stroke="#ea7a1e" stroke-width="3"/><path d="M10.5 11 A2 2 0 1 1 14.5 11 L14 21 H11Z" fill="#1a2a4a"/></svg><svg class="a" style="left:595px;top:736px" width="25" height="25" viewBox="0 0 25 25" ><circle cx="12.5" cy="12.5" r="12" fill="#db4437"/><path d="M12.5 12.5 L2.1 6.5 A12 12 0 0 0 12.5 24.5Z" fill="#0f9d58"/><path d="M12.5 12.5 L12.5 24.5 A12 12 0 0 0 22.9 6.5Z" fill="#ffcd40"/><circle cx="12.5" cy="12.5" r="5.5" fill="#fff"/><circle cx="12.5" cy="12.5" r="4.3" fill="#4285f4"/></svg><div class="a" style="left:632px;top:728px;width:47px;height:40px;background:#48545a"></div><svg class="a" style="left:644px;top:737px" width="24" height="22" viewBox="0 0 24 22" ><rect width="24" height="22" fill="#f4f4f4"/><path d="M3 4.5 L8.5 4 L18 17.5 L12.5 18 Z" fill="#1c1c28"/><path d="M23 2 C16 3 9 8 4 18 L8.5 18 C11 11 16 5 23 2 Z" fill="#1c1c28"/></svg><div class="a" style="left:538px;top:766px;width:40px;height:2px;background:#76b9ed"></div><div class="a" style="left:587px;top:766px;width:41px;height:2px;background:#76b9ed"></div><div class="a" style="left:632px;top:766px;width:47px;height:2px;background:#76b9ed"></div><svg class="a" style="left:920px;top:740px" width="25" height="15" viewBox="0 0 25 15" ><path d="M0 3L5 0L9 6L13 3L17 8" stroke="#e05020" stroke-width="3" fill="none"/><path d="M12 12L24 12L24 2Z" fill="#f06a20"/></svg><div class="t" style="left:952px;top:742px;font-size:13px;color:#fff">DEWA</div><div class="t" style="left:1000px;top:742px;font-size:13px;color:#e56767">-1.09%</div><svg class="a" style="left:1067px;top:743px" width="13" height="8" viewBox="0 0 13 8" ><path d="M1 7L6.5 1.5L12 7" stroke="#fff" stroke-width="1.3" fill="none"/></svg><svg class="a" style="left:1091px;top:741px" width="15" height="14" viewBox="0 0 15 14" ><path d="M1 13 A12 12 0 0 1 13 1M4 13 A9 9 0 0 1 13 4M7 13 A6 6 0 0 1 13 7" stroke="#fff" stroke-width="1.2" fill="none"/><circle cx="12" cy="12" r="1.6" fill="#fff"/></svg><svg class="a" style="left:1112px;top:742px" width="18" height="11" viewBox="0 0 18 11" ><path d="M3 10 C0 10 0 5 4 5 C5 1 11 0 12.5 4 C17 3.5 18 10 14 10Z" fill="#e8e8e8"/></svg><svg class="a" style="left:1136px;top:740px" width="19" height="18" viewBox="0 0 19 18" ><rect x="1" y="1" width="15" height="13" rx="1" fill="none" stroke="#fff" stroke-width="1.3"/><path d="M5 9 C5 5 11 5 11 8" stroke="#fff" fill="none"/><circle cx="14" cy="14" r="3.5" fill="#f7a21a"/></svg><svg class="a" style="left:1161px;top:741px" width="17" height="15" viewBox="0 0 17 15" ><path d="M1 5H4L8 1V14L4 10H1Z" fill="none" stroke="#fff" stroke-width="1.2"/><path d="M11 5 C12.5 6.5 12.5 8.5 11 10M13.5 3 C16 5.5 16 9.5 13.5 12" stroke="#fff" fill="none" stroke-width="1.2"/></svg><svg class="a" style="left:1188px;top:740px" width="18" height="18" viewBox="0 0 18 18" ><path d="M2 16 C5 12 8 14 10 10 L15 2 C16 1 17 2 16.5 3 L11 11 C9 14 6 15 3 15" stroke="#fff" fill="none" stroke-width="1.3"/></svg><div class="t" style="left:1219px;top:743px;font-size:11px;color:#fff">ENG</div><div class="t" style="left:1259px;top:733px;font-size:11.7px;color:#fff">9:27 AM</div><div class="t" style="left:1255px;top:751px;font-size:11.7px;color:#fff">9/16/2025</div><svg class="a" style="left:1325px;top:740px" width="18" height="18" viewBox="0 0 18 18" ><path d="M1 1H17V13H9L5 17V13H1Z" fill="#fff"/><path d="M4 5H14M4 8H14M4 11H10" stroke="#1f2b30" stroke-width="1.1"/></svg><div class="a" style="left:1360px;top:728px;width:1px;height:40px;background:#556"></div>
</body></html>
